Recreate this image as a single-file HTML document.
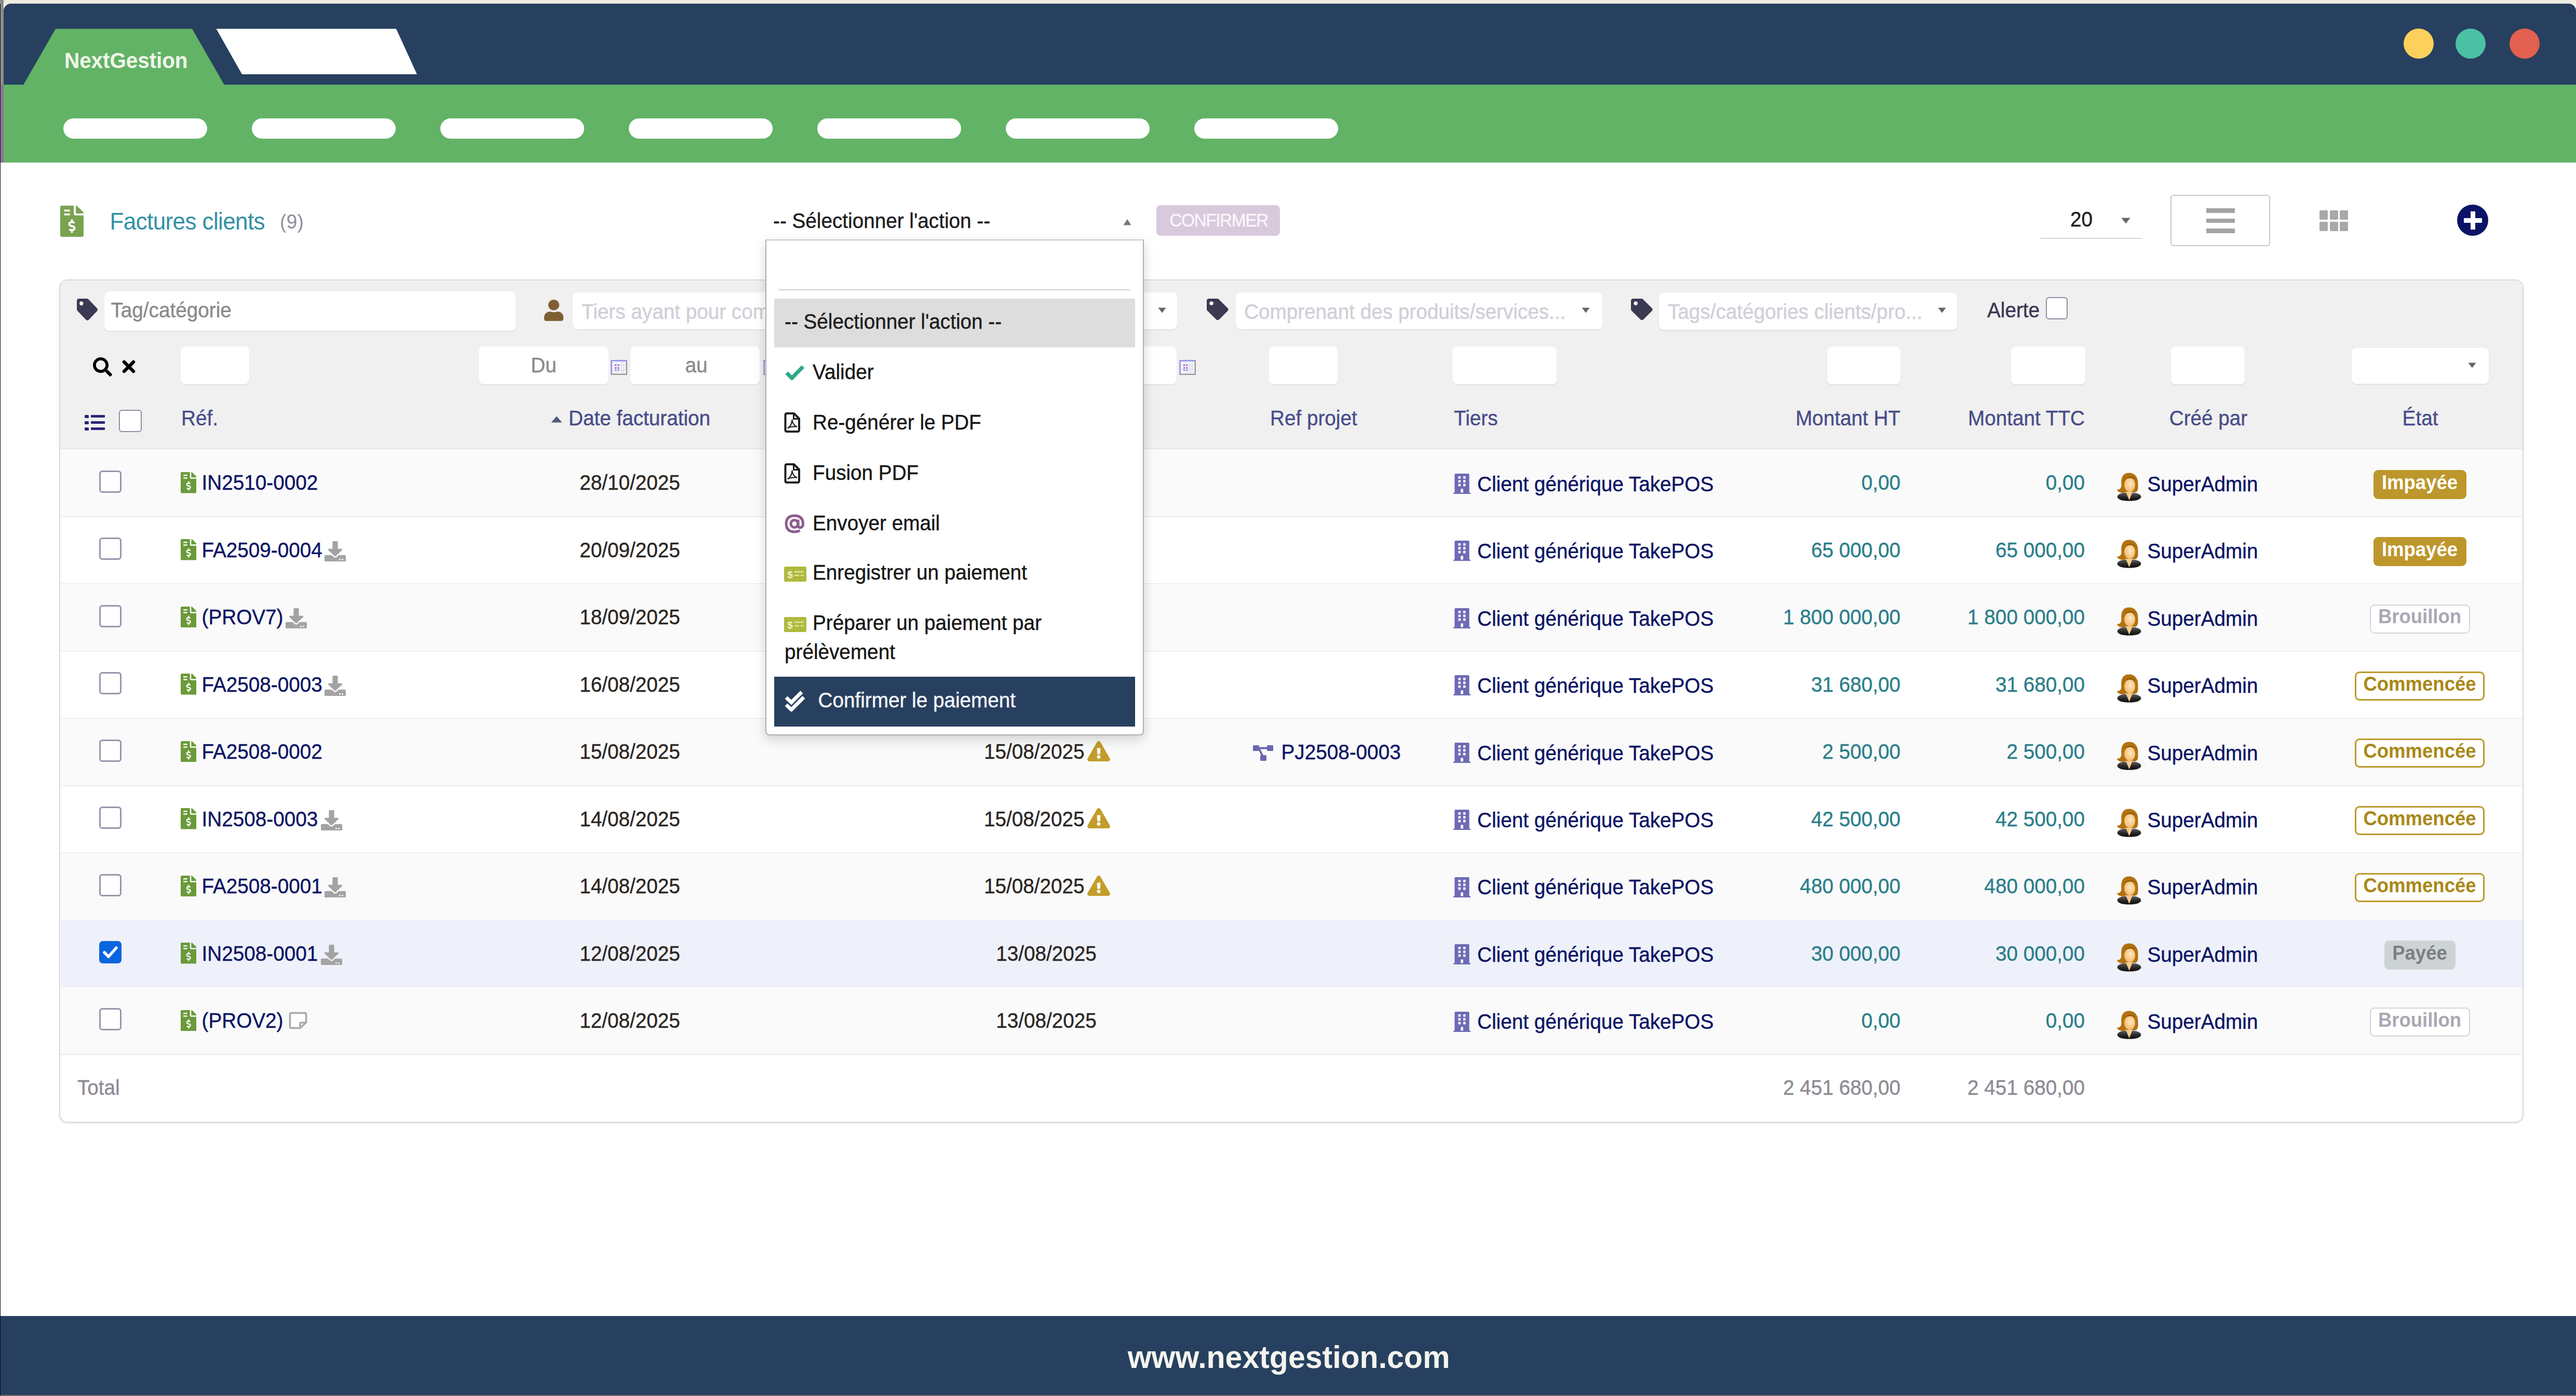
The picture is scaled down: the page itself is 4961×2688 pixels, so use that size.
<!DOCTYPE html>
<html><head><meta charset="utf-8"><title>Factures clients</title>
<style>
html,body{margin:0;padding:0}
body{width:4961px;height:2688px;position:relative;overflow:hidden;background:#fff;font-family:"Liberation Sans",sans-serif;font-size:38.7px}
body div,body span,body svg{position:absolute;display:block}
</style></head><body>
<svg width="0" height="0" style="left:0;top:0"><defs><radialGradient id="sk" cx="55%" cy="42%" r="60%"><stop offset="0" stop-color="#ffe8c2"/><stop offset="1" stop-color="#f4b96b"/></radialGradient><linearGradient id="jk" x1="0" y1="0" x2="0" y2="1"><stop offset="0" stop-color="#606060"/><stop offset="0.55" stop-color="#262626"/><stop offset="1" stop-color="#0e0e0e"/></linearGradient></defs></svg>
<div style="left:0px;top:0px;width:4961px;height:8px;background:#efece3"></div>
<div style="left:0px;top:0px;width:7px;height:163px;background:#8d8d8d"></div>
<div style="left:0px;top:163px;width:7px;height:150px;background:#9a7fa3"></div>
<div style="left:7px;top:7px;width:4954px;height:156px;background:#27405f;border-radius:14px 14px 0 0"></div>
<div style="left:0px;top:163px;width:4961px;height:150px;background:#62b366"></div>
<div style="left:0px;top:163px;width:6.5px;height:150px;background:#8c7596"></div>
<svg style="left:0px;top:0px;" width="900" height="170" viewBox="0 0 900 170" preserveAspectRatio="none"><polygon points="45,163.5 107,55.5 370,55.5 432,163.5" fill="#62b366"/><polygon points="416.5,55.5 763,55.5 803,143 466,143" fill="#fff"/></svg>
<span style="top:97.2px;font-size:40.5px;line-height:40.5px;color:#f1f6ea;white-space:nowrap;font-weight:bold;letter-spacing:-0.1px;left:124px;transform:scaleY(1.04);transform-origin:0 84.65%;">NextGestion</span>
<div style="left:4629px;top:55px;width:58px;height:58px;background:#fbd15b;border-radius:50%"></div>
<div style="left:4729px;top:55px;width:58px;height:58px;background:#4bc0a4;border-radius:50%"></div>
<div style="left:4833px;top:55px;width:58px;height:58px;background:#e2604f;border-radius:50%"></div>
<div style="left:121.5px;top:228px;width:277.5px;height:39px;background:#fff;border-radius:20px"></div>
<div style="left:484.5px;top:228px;width:277.5px;height:39px;background:#fff;border-radius:20px"></div>
<div style="left:847.5px;top:228px;width:277.5px;height:39px;background:#fff;border-radius:20px"></div>
<div style="left:1210.5px;top:228px;width:277.5px;height:39px;background:#fff;border-radius:20px"></div>
<div style="left:1573.5px;top:228px;width:277.5px;height:39px;background:#fff;border-radius:20px"></div>
<div style="left:1936.5px;top:228px;width:277.5px;height:39px;background:#fff;border-radius:20px"></div>
<div style="left:2299.5px;top:228px;width:277.5px;height:39px;background:#fff;border-radius:20px"></div>
<div style="left:0px;top:2534px;width:4961px;height:154px;background:#27405f"></div>
<div style="left:0px;top:2686px;width:4961px;height:2px;background:#74686e"></div>
<div style="left:0px;top:7px;width:1.3px;height:2681px;background:#0a0a0a"></div>
<span style="top:2585.1px;font-size:59px;line-height:59px;color:#f4f4ef;white-space:nowrap;font-weight:bold;left:2482px;transform:translateX(-50%) scaleY(1.04);transform-origin:0 84.65%;">www.nextgestion.com</span>
<svg style="left:116px;top:396px;" width="45" height="60" viewBox="0 0 384 512" fill="#7ba251" preserveAspectRatio="none"><path d="M377 105L279.1 7c-4.5-4.5-10.6-7-17-7H256v128h128v-6.1c0-6.3-2.5-12.4-7-16.9zm-153 31V0H24C10.7 0 0 10.7 0 24v464c0 13.3 10.7 24 24 24h336c13.3 0 24-10.7 24-24V160H248c-13.2 0-24-10.8-24-24zM64 72c0-4.42 3.58-8 8-8h80c4.42 0 8 3.58 8 8v16c0 4.42-3.58 8-8 8H72c-4.42 0-8-3.58-8-8V72zm0 80v-16c0-4.42 3.58-8 8-8h80c4.42 0 8 3.58 8 8v16c0 4.42-3.58 8-8 8H72c-4.42 0-8-3.58-8-8zm144 263.88V440c0 4.42-3.58 8-8 8h-16c-4.42 0-8-3.58-8-8v-24.29c-11.29-.58-22.27-4.52-31.37-11.35-3.9-2.93-4.1-8.77-.57-12.14l11.75-11.21c2.77-2.64 6.89-2.76 10.13-.73 3.87 2.42 8.26 3.72 12.82 3.72h28.11c6.5 0 11.8-5.92 11.8-13.19 0-5.95-3.61-11.19-8.77-12.73l-45-13.5c-18.59-5.58-31.58-23.42-31.58-43.39 0-24.52 19.05-44.44 42.67-45.07V232c0-4.42 3.58-8 8-8h16c4.42 0 8 3.58 8 8v24.29c11.29.58 22.27 4.51 31.37 11.35 3.9 2.93 4.1 8.77.57 12.14l-11.75 11.21c-2.77 2.64-6.89 2.76-10.13.73-3.87-2.43-8.26-3.72-12.82-3.72h-28.11c-6.5 0-11.8 5.92-11.8 13.19 0 5.95 3.61 11.19 8.77 12.73l45 13.5c18.59 5.58 31.58 23.42 31.58 43.39 0 24.53-19.05 44.44-42.67 45.07z"/></svg>
<span style="top:404.8px;font-size:44px;line-height:44px;color:#3190a4;white-space:nowrap;letter-spacing:-0.6px;left:211.5px;transform:scaleY(1.04);transform-origin:0 84.65%;-webkit-text-stroke:0;">Factures clients</span>
<span style="top:409.3px;font-size:37.5px;line-height:37.5px;color:#938e9e;white-space:nowrap;left:539px;transform:scaleY(1.04);transform-origin:0 84.65%;-webkit-text-stroke:0;">(9)</span>
<span style="top:407.2px;font-size:38.7px;line-height:38.7px;color:#1c1c1c;white-space:nowrap;-webkit-text-stroke:0.4px;left:1489px;transform:scaleY(1.04);transform-origin:0 84.65%;">-- Sélectionner l'action --</span>
<svg style="left:2163px;top:421px;" width="16" height="13" viewBox="0 0 16 13" preserveAspectRatio="none"><polygon points="8,1 15.5,12.5 0.5,12.5" fill="#777"/></svg>
<div style="left:2227px;top:395px;width:238px;height:58.5px;background:#d9c9dd;border-radius:8px"></div>
<span style="top:407.6px;font-size:33.5px;line-height:33.5px;color:#faf6fb;white-space:nowrap;-webkit-text-stroke:0.4px;letter-spacing:-1.5px;left:2347px;transform:translateX(-50%) scaleY(1.04);transform-origin:0 84.65%;">CONFIRMER</span>
<span style="top:404.2px;font-size:38.7px;line-height:38.7px;color:#1c1c1c;white-space:nowrap;-webkit-text-stroke:0.4px;left:3987px;transform:scaleY(1.04);transform-origin:0 84.65%;">20</span>
<svg style="left:4085px;top:419px;" width="18" height="12" viewBox="0 0 18 12" preserveAspectRatio="none"><polygon points="0.5,0.5 17.5,0.5 9,11.5" fill="#666"/></svg>
<div style="left:3929px;top:458px;width:196px;height:2px;background:#d6d6d6"></div>
<div style="left:4180px;top:375px;width:192px;height:99px;border:2px solid #c9c9c9;border-radius:6px;box-sizing:border-box;background:#fff"></div>
<div style="left:4249px;top:401px;width:55px;height:8.5px;background:#a3a3a3"></div>
<div style="left:4249px;top:420.5px;width:55px;height:8.5px;background:#a3a3a3"></div>
<div style="left:4249px;top:440px;width:55px;height:8.5px;background:#a3a3a3"></div>
<div style="left:4467.0px;top:405.0px;width:16px;height:18px;background:#a9a9a9;border-radius:2px"></div>
<div style="left:4486.5px;top:405.0px;width:16px;height:18px;background:#a9a9a9;border-radius:2px"></div>
<div style="left:4506.0px;top:405.0px;width:16px;height:18px;background:#a9a9a9;border-radius:2px"></div>
<div style="left:4467.0px;top:426.5px;width:16px;height:18px;background:#a9a9a9;border-radius:2px"></div>
<div style="left:4486.5px;top:426.5px;width:16px;height:18px;background:#a9a9a9;border-radius:2px"></div>
<div style="left:4506.0px;top:426.5px;width:16px;height:18px;background:#a9a9a9;border-radius:2px"></div>
<div style="left:4732px;top:394px;width:60px;height:60px;background:#0b1367;border-radius:50%"></div>
<div style="left:4744.5px;top:419.5px;width:35px;height:9px;background:#fff"></div>
<div style="left:4757.5px;top:406.5px;width:9px;height:35px;background:#fff"></div>
<div style="left:114px;top:538px;width:4746px;height:1624px;border:2.5px solid #d9d9d9;border-radius:16px;box-sizing:border-box;background:#fff;overflow:hidden;box-shadow:0 2px 3px rgba(0,0,0,0.08)"><div style="left:0;top:0;width:4746px;height:324.5px;background:#f0f0f0"></div></div>
<div style="left:116.5px;top:864px;width:4741.0px;height:2px;background:#dcdcdc"></div>
<div style="left:116.5px;top:865.3px;width:4741.0px;height:129.45px;background:#fafafa"></div>
<div style="left:116.5px;top:994.75px;width:4741.0px;height:129.45px;background:#ffffff"></div>
<div style="left:116.5px;top:993.75px;width:4741.0px;height:2px;background:#eeeeee"></div>
<div style="left:116.5px;top:1124.1999999999998px;width:4741.0px;height:129.45px;background:#fafafa"></div>
<div style="left:116.5px;top:1123.1999999999998px;width:4741.0px;height:2px;background:#eeeeee"></div>
<div style="left:116.5px;top:1253.6499999999999px;width:4741.0px;height:129.45px;background:#ffffff"></div>
<div style="left:116.5px;top:1252.6499999999999px;width:4741.0px;height:2px;background:#eeeeee"></div>
<div style="left:116.5px;top:1383.1px;width:4741.0px;height:129.45px;background:#fafafa"></div>
<div style="left:116.5px;top:1382.1px;width:4741.0px;height:2px;background:#eeeeee"></div>
<div style="left:116.5px;top:1512.55px;width:4741.0px;height:129.45px;background:#ffffff"></div>
<div style="left:116.5px;top:1511.55px;width:4741.0px;height:2px;background:#eeeeee"></div>
<div style="left:116.5px;top:1642.0px;width:4741.0px;height:129.45px;background:#fafafa"></div>
<div style="left:116.5px;top:1641.0px;width:4741.0px;height:2px;background:#eeeeee"></div>
<div style="left:116.5px;top:1771.4499999999998px;width:4741.0px;height:129.45px;background:#eef1f9"></div>
<div style="left:116.5px;top:1900.8999999999999px;width:4741.0px;height:129.45px;background:#fafafa"></div>
<div style="left:116.5px;top:2029.35px;width:4741.0px;height:2px;background:#e9e9e9"></div>
<svg style="left:148px;top:574.5px;" width="40" height="42" viewBox="0 0 512 512" fill="#3b3a52" preserveAspectRatio="none"><path d="M0 252.118V48C0 21.49 21.49 0 48 0h204.118a48 48 0 0 1 33.941 14.059l211.882 211.882c18.745 18.745 18.745 49.137 0 67.882L293.823 497.941c-18.745 18.745-49.137 18.745-67.882 0L14.059 286.059A48 48 0 0 1 0 252.118zM112 64c-26.51 0-48 21.49-48 48s21.49 48 48 48 48-21.49 48-48-21.49-48-48-48z"/></svg>
<div style="left:201px;top:561px;width:792px;height:76px;background:#fff;border-radius:9px;box-shadow:0 2px 2px rgba(0,0,0,0.07);"></div>
<span style="top:578.7px;font-size:38.7px;line-height:38.7px;color:#8a8a8a;white-space:nowrap;-webkit-text-stroke:0.4px;left:213.5px;transform:scaleY(1.04);transform-origin:0 84.65%;">Tag/catégorie</span>
<svg style="left:1048px;top:577px;" width="37" height="41" viewBox="0 0 448 512" fill="#7f5f33" preserveAspectRatio="none"><path d="M224 256c70.7 0 128-57.3 128-128S294.7 0 224 0 96 57.3 96 128s57.3 128 128 128zm89.6 32h-16.7c-22.2 10.2-46.9 16-72.9 16s-50.6-5.8-72.9-16h-16.7C60.2 288 0 348.2 0 422.4V464c0 26.5 21.5 48 48 48h352c26.5 0 48-21.5 48-48v-41.6c0-74.2-60.2-134.4-134.4-134.4z"/></svg>
<div style="left:1103px;top:563px;width:1164px;height:71px;background:#fff;border-radius:9px;box-shadow:0 2px 2px rgba(0,0,0,0.07);"></div>
<span style="top:582.2px;font-size:38.7px;line-height:38.7px;color:#cfcfd7;white-space:nowrap;-webkit-text-stroke:0.4px;left:1120px;transform:scaleY(1.04);transform-origin:0 84.65%;">Tiers ayant pour com</span>
<svg style="left:2230px;top:592px;" width="16" height="11" viewBox="0 0 16 11" preserveAspectRatio="none"><polygon points="0.5,0.5 15.5,0.5 8,10.5" fill="#666"/></svg>
<svg style="left:2324px;top:575px;" width="41.5" height="41.5" viewBox="0 0 512 512" fill="#3b3a52" preserveAspectRatio="none"><path d="M0 252.118V48C0 21.49 21.49 0 48 0h204.118a48 48 0 0 1 33.941 14.059l211.882 211.882c18.745 18.745 18.745 49.137 0 67.882L293.823 497.941c-18.745 18.745-49.137 18.745-67.882 0L14.059 286.059A48 48 0 0 1 0 252.118zM112 64c-26.51 0-48 21.49-48 48s21.49 48 48 48 48-21.49 48-48-21.49-48-48-48z"/></svg>
<div style="left:2380px;top:563px;width:706px;height:71px;background:#fff;border-radius:9px;box-shadow:0 2px 2px rgba(0,0,0,0.07);"></div>
<span style="top:582.2px;font-size:38.7px;line-height:38.7px;color:#cfcfd7;white-space:nowrap;-webkit-text-stroke:0.4px;left:2396px;transform:scaleY(1.04);transform-origin:0 84.65%;">Comprenant des produits/services...</span>
<svg style="left:3046px;top:592px;" width="16" height="11" viewBox="0 0 16 11" preserveAspectRatio="none"><polygon points="0.5,0.5 15.5,0.5 8,10.5" fill="#666"/></svg>
<svg style="left:3141px;top:575px;" width="41.5" height="41.5" viewBox="0 0 512 512" fill="#3b3a52" preserveAspectRatio="none"><path d="M0 252.118V48C0 21.49 21.49 0 48 0h204.118a48 48 0 0 1 33.941 14.059l211.882 211.882c18.745 18.745 18.745 49.137 0 67.882L293.823 497.941c-18.745 18.745-49.137 18.745-67.882 0L14.059 286.059A48 48 0 0 1 0 252.118zM112 64c-26.51 0-48 21.49-48 48s21.49 48 48 48 48-21.49 48-48-21.49-48-48-48z"/></svg>
<div style="left:3195px;top:564px;width:574px;height:71px;background:#fff;border-radius:9px;box-shadow:0 2px 2px rgba(0,0,0,0.07);"></div>
<span style="top:582.2px;font-size:38.7px;line-height:38.7px;color:#cfcfd7;white-space:nowrap;-webkit-text-stroke:0.4px;left:3212px;transform:scaleY(1.04);transform-origin:0 84.65%;">Tags/catégories clients/pro...</span>
<svg style="left:3732px;top:592px;" width="16" height="11" viewBox="0 0 16 11" preserveAspectRatio="none"><polygon points="0.5,0.5 15.5,0.5 8,10.5" fill="#666"/></svg>
<span style="top:579.2px;font-size:38.7px;line-height:38.7px;color:#3a3550;white-space:nowrap;-webkit-text-stroke:0.4px;left:3827px;transform:scaleY(1.04);transform-origin:0 84.65%;">Alerte</span>
<div style="left:3940px;top:572px;width:42px;height:43px;background:#fff;border:2.5px solid #8f8ca3;border-radius:6px;box-sizing:border-box"></div>
<svg style="left:179px;top:688px;" width="37" height="37" viewBox="0 0 512 512" fill="#000" preserveAspectRatio="none"><path d="M505 442.7L405.3 343c-4.5-4.5-10.6-7-17-7H372c27.6-35.3 44-79.7 44-128C416 93.1 322.9 0 208 0S0 93.1 0 208s93.1 208 208 208c48.3 0 92.7-16.4 128-44v16.3c0 6.4 2.500 12.5 7 17l99.700 99.700c9.4 9.4 24.600 9.4 33.900 0l28.300-28.300c9.400-9.400 9.400-24.600.1-34zM208 336c-70.700 0-128-57.200-128-128 0-70.700 57.200-128 128-128 70.700 0 128 57.200 128 128 0 70.700-57.200 128-128 128z"/></svg>
<svg style="left:234.5px;top:693px;" width="26" height="26" viewBox="0 0 26 26" preserveAspectRatio="none"><path d="M4 4 L22 22 M22 4 L4 22" stroke="#000" stroke-width="6.5" stroke-linecap="round"/></svg>
<div style="left:348px;top:667px;width:132px;height:73px;background:#fff;border-radius:9px;box-shadow:0 2px 2px rgba(0,0,0,0.07);"></div>
<div style="left:922px;top:667px;width:250px;height:73px;background:#fff;border-radius:9px;box-shadow:0 2px 2px rgba(0,0,0,0.07);"></div>
<div style="left:1214px;top:667px;width:249px;height:73px;background:#fff;border-radius:9px;box-shadow:0 2px 2px rgba(0,0,0,0.07);"></div>
<div style="left:1700px;top:667px;width:566px;height:73px;background:#fff;border-radius:9px;box-shadow:0 2px 2px rgba(0,0,0,0.07);"></div>
<div style="left:2444px;top:667px;width:132px;height:73px;background:#fff;border-radius:9px;box-shadow:0 2px 2px rgba(0,0,0,0.07);"></div>
<div style="left:2797px;top:667px;width:201px;height:73px;background:#fff;border-radius:9px;box-shadow:0 2px 2px rgba(0,0,0,0.07);"></div>
<div style="left:3519px;top:667px;width:141px;height:73px;background:#fff;border-radius:9px;box-shadow:0 2px 2px rgba(0,0,0,0.07);"></div>
<div style="left:3873px;top:667px;width:143px;height:73px;background:#fff;border-radius:9px;box-shadow:0 2px 2px rgba(0,0,0,0.07);"></div>
<div style="left:4181px;top:667px;width:142px;height:73px;background:#fff;border-radius:9px;box-shadow:0 2px 2px rgba(0,0,0,0.07);"></div>
<div style="left:4529px;top:670px;width:264px;height:69px;background:#fff;border-radius:9px;box-shadow:0 2px 2px rgba(0,0,0,0.07);"></div>
<svg style="left:4753px;top:698px;" width="16" height="11" viewBox="0 0 16 11" preserveAspectRatio="none"><polygon points="0.5,0.5 15.5,0.5 8,10.5" fill="#666"/></svg>
<span style="top:684.7px;font-size:38.7px;line-height:38.7px;color:#8a8a8a;white-space:nowrap;-webkit-text-stroke:0.4px;left:1047px;transform:translateX(-50%) scaleY(1.04);transform-origin:0 84.65%;">Du</span>
<span style="top:684.7px;font-size:38.7px;line-height:38.7px;color:#8a8a8a;white-space:nowrap;-webkit-text-stroke:0.4px;left:1341px;transform:translateX(-50%) scaleY(1.04);transform-origin:0 84.65%;">au</span>
<svg style="left:1176px;top:693px;" width="32" height="29" viewBox="0 0 32 29" preserveAspectRatio="none"><rect x="0" y="0" width="32" height="29" fill="#9c9c9c"/><path d="M0 0H32L29.500 3H3V26L0 29z" fill="#9b9ce8"/><rect x="3" y="3" width="26.500" height="23.500" fill="#f5f5fb"/><path d="M3 10.500H29.500M3 18.500H29.500M12 3V26.500M20.500 3V26.500M25 3V26.500" stroke="#dcdcea" stroke-width="1.5"/><path d="M8 8.500h3v3h-3zM13.500 8.500h3v3h-3zM8 14h3v3h-3zM13.500 14h3v3h-3zM8 19h3v2h-3zM13.500 19h3v2h-3z" fill="#a866c9"/></svg>
<svg style="left:1469.5px;top:693px;" width="32" height="29" viewBox="0 0 32 29" preserveAspectRatio="none"><rect x="0" y="0" width="32" height="29" fill="#9c9c9c"/><path d="M0 0H32L29.500 3H3V26L0 29z" fill="#9b9ce8"/><rect x="3" y="3" width="26.500" height="23.500" fill="#f5f5fb"/><path d="M3 10.500H29.500M3 18.500H29.500M12 3V26.500M20.500 3V26.500M25 3V26.500" stroke="#dcdcea" stroke-width="1.5"/><path d="M8 8.500h3v3h-3zM13.500 8.500h3v3h-3zM8 14h3v3h-3zM13.500 14h3v3h-3zM8 19h3v2h-3zM13.500 19h3v2h-3z" fill="#a866c9"/></svg>
<svg style="left:2271px;top:693px;" width="32" height="29" viewBox="0 0 32 29" preserveAspectRatio="none"><rect x="0" y="0" width="32" height="29" fill="#9c9c9c"/><path d="M0 0H32L29.500 3H3V26L0 29z" fill="#9b9ce8"/><rect x="3" y="3" width="26.500" height="23.500" fill="#f5f5fb"/><path d="M3 10.500H29.500M3 18.500H29.500M12 3V26.500M20.500 3V26.500M25 3V26.500" stroke="#dcdcea" stroke-width="1.5"/><path d="M8 8.500h3v3h-3zM13.500 8.500h3v3h-3zM8 14h3v3h-3zM13.500 14h3v3h-3zM8 19h3v2h-3zM13.500 19h3v2h-3z" fill="#a866c9"/></svg>
<div style="left:163px;top:798.7px;width:8px;height:6px;background:#2b2678;border-radius:1.5px"></div>
<div style="left:175px;top:799.2px;width:26.5px;height:5px;background:#2b2678;border-radius:1px"></div>
<div style="left:163px;top:810.75px;width:8px;height:6px;background:#2b2678;border-radius:1.5px"></div>
<div style="left:175px;top:811.25px;width:26.5px;height:5px;background:#2b2678;border-radius:1px"></div>
<div style="left:163px;top:822.8000000000001px;width:8px;height:6px;background:#2b2678;border-radius:1.5px"></div>
<div style="left:175px;top:823.3000000000001px;width:26.5px;height:5px;background:#2b2678;border-radius:1px"></div>
<div style="left:229px;top:789px;width:44px;height:43px;background:#fff;border:2.5px solid #8f8ca3;border-radius:6px;box-sizing:border-box"></div>
<span style="top:787.2px;font-size:38.7px;line-height:38.7px;color:#484d8a;white-space:nowrap;-webkit-text-stroke:0.4px;left:349px;transform:scaleY(1.04);transform-origin:0 84.65%;">Réf.</span>
<svg style="left:1061px;top:801px;" width="22" height="13" viewBox="0 0 22 13" preserveAspectRatio="none"><polygon points="11,0.5 21.5,12.5 0.5,12.5" fill="#555a7a"/></svg>
<span style="top:787.2px;font-size:38.7px;line-height:38.7px;color:#484d8a;white-space:nowrap;left:1095px;transform:scaleY(1.04);transform-origin:0 84.65%;-webkit-text-stroke:0.5px #484d8a;">Date facturation</span>
<span style="top:787.2px;font-size:38.7px;line-height:38.7px;color:#484d8a;white-space:nowrap;-webkit-text-stroke:0.4px;left:1880px;transform:scaleY(1.04);transform-origin:0 84.65%;">Date échéance</span>
<span style="top:787.2px;font-size:38.7px;line-height:38.7px;color:#484d8a;white-space:nowrap;-webkit-text-stroke:0.4px;left:2446px;transform:scaleY(1.04);transform-origin:0 84.65%;">Ref projet</span>
<span style="top:787.2px;font-size:38.7px;line-height:38.7px;color:#484d8a;white-space:nowrap;-webkit-text-stroke:0.4px;left:2800px;transform:scaleY(1.04);transform-origin:0 84.65%;">Tiers</span>
<span style="top:787.2px;font-size:38.7px;line-height:38.7px;color:#484d8a;white-space:nowrap;-webkit-text-stroke:0.4px;right:1301px;transform:scaleY(1.04);transform-origin:0 84.65%;">Montant HT</span>
<span style="top:787.2px;font-size:38.7px;line-height:38.7px;color:#484d8a;white-space:nowrap;-webkit-text-stroke:0.4px;right:946px;transform:scaleY(1.04);transform-origin:0 84.65%;">Montant TTC</span>
<span style="top:787.2px;font-size:38.7px;line-height:38.7px;color:#484d8a;white-space:nowrap;-webkit-text-stroke:0.4px;left:4253px;transform:translateX(-50%) scaleY(1.04);transform-origin:0 84.65%;">Créé par</span>
<span style="top:787.2px;font-size:38.7px;line-height:38.7px;color:#484d8a;white-space:nowrap;-webkit-text-stroke:0.4px;left:4661px;transform:translateX(-50%) scaleY(1.04);transform-origin:0 84.65%;">État</span>
<div style="left:191px;top:905.8249999999999px;width:43px;height:43px;background:#fff;border:3px solid #9996ac;border-radius:6px;box-sizing:border-box"></div>
<svg style="left:347.5px;top:909.025px;" width="30.5" height="40.5" viewBox="0 0 384 512" fill="#6b9a3a" preserveAspectRatio="none"><path d="M377 105L279.1 7c-4.5-4.5-10.6-7-17-7H256v128h128v-6.1c0-6.3-2.5-12.4-7-16.9zm-153 31V0H24C10.7 0 0 10.7 0 24v464c0 13.3 10.7 24 24 24h336c13.3 0 24-10.7 24-24V160H248c-13.2 0-24-10.8-24-24zM64 72c0-4.42 3.58-8 8-8h80c4.42 0 8 3.58 8 8v16c0 4.42-3.58 8-8 8H72c-4.42 0-8-3.58-8-8V72zm0 80v-16c0-4.42 3.58-8 8-8h80c4.42 0 8 3.58 8 8v16c0 4.42-3.58 8-8 8H72c-4.42 0-8-3.58-8-8zm144 263.88V440c0 4.42-3.58 8-8 8h-16c-4.42 0-8-3.58-8-8v-24.29c-11.29-.58-22.27-4.52-31.37-11.35-3.9-2.93-4.1-8.77-.57-12.14l11.75-11.21c2.77-2.64 6.89-2.76 10.13-.73 3.87 2.42 8.26 3.72 12.82 3.72h28.11c6.5 0 11.8-5.92 11.8-13.19 0-5.95-3.61-11.19-8.77-12.73l-45-13.5c-18.59-5.58-31.58-23.42-31.58-43.39 0-24.52 19.05-44.44 42.67-45.07V232c0-4.42 3.58-8 8-8h16c4.42 0 8 3.58 8 8v24.29c11.29.58 22.27 4.51 31.37 11.35 3.9 2.93 4.1 8.77.57 12.14l-11.75 11.21c-2.77 2.64-6.89 2.76-10.13.73-3.87-2.43-8.26-3.72-12.82-3.72h-28.11c-6.5 0-11.8 5.92-11.8 13.19 0 5.95 3.61 11.19 8.77 12.73l45 13.5c18.59 5.58 31.58 23.42 31.58 43.39 0 24.53-19.05 44.44-42.67 45.07z"/></svg>
<span style="top:911.3px;font-size:38.7px;line-height:38.7px;color:#0a1464;white-space:nowrap;-webkit-text-stroke:0.4px;left:388.5px;transform:scaleY(1.04);transform-origin:0 84.65%;">IN2510-0002</span>
<span style="top:911.3px;font-size:38.7px;line-height:38.7px;color:#2b2622;white-space:nowrap;-webkit-text-stroke:0.4px;left:1213px;transform:translateX(-50%) scaleY(1.04);transform-origin:0 84.65%;">28/10/2025</span>
<svg style="left:2799px;top:912.025px;" width="33" height="39" viewBox="0 0 448 512" fill="#6e6ab6" preserveAspectRatio="none"><path d="M436 480h-20V24c0-13.255-10.745-24-24-24H56C42.745 0 32 10.745 32 24v456H12c-6.627 0-12 5.373-12 12v20h448v-20c0-6.627-5.373-12-12-12zM128 76c0-6.627 5.373-12 12-12h40c6.627 0 12 5.373 12 12v40c0 6.627-5.373 12-12 12h-40c-6.627 0-12-5.373-12-12V76zm0 96c0-6.627 5.373-12 12-12h40c6.627 0 12 5.373 12 12v40c0 6.627-5.373 12-12 12h-40c-6.627 0-12-5.373-12-12v-40zm52 148h-40c-6.627 0-12-5.373-12-12v-40c0-6.627 5.373-12 12-12h40c6.627 0 12 5.373 12 12v40c0 6.627-5.373 12-12 12zm76 160h-64v-84c0-6.627 5.373-12 12-12h40c6.627 0 12 5.373 12 12v84zm64-172c0 6.627-5.373 12-12 12h-40c-6.627 0-12-5.373-12-12v-40c0-6.627 5.373-12 12-12h40c6.627 0 12 5.373 12 12v40zm0-96c0 6.627-5.373 12-12 12h-40c-6.627 0-12-5.373-12-12v-40c0-6.627 5.373-12 12-12h40c6.627 0 12 5.373 12 12v40zm0-96c0 6.627-5.373 12-12 12h-40c-6.627 0-12-5.373-12-12V76c0-6.627 5.373-12 12-12h40c6.627 0 12 5.373 12 12v40z"/></svg>
<span style="top:913.7px;font-size:38.7px;line-height:38.7px;color:#0a1464;white-space:nowrap;-webkit-text-stroke:0.4px;left:2845px;transform:scaleY(1.04);transform-origin:0 84.65%;">Client générique TakePOS</span>
<span style="top:911.3px;font-size:38.7px;line-height:38.7px;color:#2b7e8a;white-space:nowrap;-webkit-text-stroke:0.4px;right:1301px;transform:scaleY(1.04);transform-origin:0 84.65%;">0,00</span>
<span style="top:911.3px;font-size:38.7px;line-height:38.7px;color:#2b7e8a;white-space:nowrap;-webkit-text-stroke:0.4px;right:946px;transform:scaleY(1.04);transform-origin:0 84.65%;">0,00</span>
<svg style="left:4075px;top:910.025px;" width="50" height="55" viewBox="0 0 50 55" preserveAspectRatio="none"><path d="M2.500 47 Q3 40 17 38.500 L33 38.500 Q48 40 48.500 47 Q46 54.500 25.500 54.500 Q5 54.500 2.500 47z" fill="url(#jk)"/>
<path d="M18.500 36 L25.500 53 L32.500 36z" fill="#f8ca8c"/>
<path d="M25 0.500 C12 0.500 9.500 12 10.500 23 C10.800 30 7 33.500 1.500 32.500 C4 39 14 40.500 19 37 L32 37 C39 40 43.500 36 42.500 24 C43.500 11 38 0.500 25 0.500z" fill="#b3720f"/>
<ellipse cx="26.500" cy="23.500" rx="10.500" ry="13.500" fill="url(#sk)"/>
<path d="M13 25 C13 12 26 7 38 13.500 C35 4.500 15 3 13 25z" fill="#9a5f0a"/></svg>
<span style="top:913.7px;font-size:38.7px;line-height:38.7px;color:#0a1464;white-space:nowrap;-webkit-text-stroke:0.4px;left:4135.5px;transform:scaleY(1.04);transform-origin:0 84.65%;">SuperAdmin</span>
<div style="left:4570.5px;top:904.625px;width:179px;height:56px;background:#bd972c;border-radius:9px;"></div>
<span style="top:911.5px;font-size:36.5px;line-height:36.5px;color:#ffffff;white-space:nowrap;font-weight:bold;left:4660px;transform:translateX(-50%) scaleY(1.08);transform-origin:0 84.65%;">Impayée</span>
<div style="left:191px;top:1035.2749999999999px;width:43px;height:43px;background:#fff;border:3px solid #9996ac;border-radius:6px;box-sizing:border-box"></div>
<svg style="left:347.5px;top:1038.475px;" width="30.5" height="40.5" viewBox="0 0 384 512" fill="#6b9a3a" preserveAspectRatio="none"><path d="M377 105L279.1 7c-4.5-4.5-10.6-7-17-7H256v128h128v-6.1c0-6.3-2.5-12.4-7-16.9zm-153 31V0H24C10.7 0 0 10.7 0 24v464c0 13.3 10.7 24 24 24h336c13.3 0 24-10.7 24-24V160H248c-13.2 0-24-10.8-24-24zM64 72c0-4.42 3.58-8 8-8h80c4.42 0 8 3.58 8 8v16c0 4.42-3.58 8-8 8H72c-4.42 0-8-3.58-8-8V72zm0 80v-16c0-4.42 3.58-8 8-8h80c4.42 0 8 3.58 8 8v16c0 4.42-3.58 8-8 8H72c-4.42 0-8-3.58-8-8zm144 263.88V440c0 4.42-3.58 8-8 8h-16c-4.42 0-8-3.58-8-8v-24.29c-11.29-.58-22.27-4.52-31.37-11.35-3.9-2.93-4.1-8.77-.57-12.14l11.75-11.21c2.77-2.64 6.89-2.76 10.13-.73 3.87 2.42 8.26 3.72 12.82 3.72h28.11c6.5 0 11.8-5.92 11.8-13.19 0-5.95-3.61-11.19-8.77-12.73l-45-13.5c-18.59-5.58-31.58-23.42-31.58-43.39 0-24.52 19.05-44.44 42.67-45.07V232c0-4.42 3.58-8 8-8h16c4.42 0 8 3.58 8 8v24.29c11.29.58 22.27 4.51 31.37 11.35 3.9 2.93 4.1 8.77.57 12.14l-11.75 11.21c-2.77 2.64-6.89 2.76-10.13.73-3.87-2.43-8.26-3.72-12.82-3.72h-28.11c-6.5 0-11.8 5.92-11.8 13.19 0 5.95 3.61 11.19 8.77 12.73l45 13.5c18.59 5.58 31.58 23.42 31.58 43.39 0 24.53-19.05 44.44-42.67 45.07z"/></svg>
<span style="top:1040.8px;font-size:38.7px;line-height:38.7px;color:#0a1464;white-space:nowrap;-webkit-text-stroke:0.4px;left:388.5px;transform:scaleY(1.04);transform-origin:0 84.65%;">FA2509-0004</span>
<svg style="left:624.5px;top:1041.975px;" width="41" height="39" viewBox="0 0 512 512" fill="#a3a3a3" preserveAspectRatio="none"><path d="M216 0h80c13.3 0 24 10.7 24 24v168h87.7c17.8 0 26.7 21.5 14.1 34.1L269.7 378.3c-7.5 7.5-19.8 7.5-27.3 0L90.1 226.1c-12.6-12.6-3.7-34.1 14.1-34.1H192V24c0-13.3 10.7-24 24-24zm296 376v112c0 13.3-10.7 24-24 24H24c-13.3 0-24-10.7-24-24V376c0-13.3 10.7-24 24-24h146.7l49 49c20.1 20.1 52.5 20.1 72.6 0l49-49H488c13.3 0 24 10.7 24 24zm-124 88c0-11-9-20-20-20s-20 9-20 20 9 20 20 20 20-9 20-20zm64 0c0-11-9-20-20-20s-20 9-20 20 9 20 20 20 20-9 20-20z"/></svg>
<span style="top:1040.8px;font-size:38.7px;line-height:38.7px;color:#2b2622;white-space:nowrap;-webkit-text-stroke:0.4px;left:1213px;transform:translateX(-50%) scaleY(1.04);transform-origin:0 84.65%;">20/09/2025</span>
<svg style="left:2799px;top:1041.475px;" width="33" height="39" viewBox="0 0 448 512" fill="#6e6ab6" preserveAspectRatio="none"><path d="M436 480h-20V24c0-13.255-10.745-24-24-24H56C42.745 0 32 10.745 32 24v456H12c-6.627 0-12 5.373-12 12v20h448v-20c0-6.627-5.373-12-12-12zM128 76c0-6.627 5.373-12 12-12h40c6.627 0 12 5.373 12 12v40c0 6.627-5.373 12-12 12h-40c-6.627 0-12-5.373-12-12V76zm0 96c0-6.627 5.373-12 12-12h40c6.627 0 12 5.373 12 12v40c0 6.627-5.373 12-12 12h-40c-6.627 0-12-5.373-12-12v-40zm52 148h-40c-6.627 0-12-5.373-12-12v-40c0-6.627 5.373-12 12-12h40c6.627 0 12 5.373 12 12v40c0 6.627-5.373 12-12 12zm76 160h-64v-84c0-6.627 5.373-12 12-12h40c6.627 0 12 5.373 12 12v84zm64-172c0 6.627-5.373 12-12 12h-40c-6.627 0-12-5.373-12-12v-40c0-6.627 5.373-12 12-12h40c6.627 0 12 5.373 12 12v40zm0-96c0 6.627-5.373 12-12 12h-40c-6.627 0-12-5.373-12-12v-40c0-6.627 5.373-12 12-12h40c6.627 0 12 5.373 12 12v40zm0-96c0 6.627-5.373 12-12 12h-40c-6.627 0-12-5.373-12-12V76c0-6.627 5.373-12 12-12h40c6.627 0 12 5.373 12 12v40z"/></svg>
<span style="top:1043.2px;font-size:38.7px;line-height:38.7px;color:#0a1464;white-space:nowrap;-webkit-text-stroke:0.4px;left:2845px;transform:scaleY(1.04);transform-origin:0 84.65%;">Client générique TakePOS</span>
<span style="top:1040.8px;font-size:38.7px;line-height:38.7px;color:#2b7e8a;white-space:nowrap;-webkit-text-stroke:0.4px;right:1301px;transform:scaleY(1.04);transform-origin:0 84.65%;">65 000,00</span>
<span style="top:1040.8px;font-size:38.7px;line-height:38.7px;color:#2b7e8a;white-space:nowrap;-webkit-text-stroke:0.4px;right:946px;transform:scaleY(1.04);transform-origin:0 84.65%;">65 000,00</span>
<svg style="left:4075px;top:1039.475px;" width="50" height="55" viewBox="0 0 50 55" preserveAspectRatio="none"><path d="M2.500 47 Q3 40 17 38.500 L33 38.500 Q48 40 48.500 47 Q46 54.500 25.500 54.500 Q5 54.500 2.500 47z" fill="url(#jk)"/>
<path d="M18.500 36 L25.500 53 L32.500 36z" fill="#f8ca8c"/>
<path d="M25 0.500 C12 0.500 9.500 12 10.500 23 C10.800 30 7 33.500 1.500 32.500 C4 39 14 40.500 19 37 L32 37 C39 40 43.500 36 42.500 24 C43.500 11 38 0.500 25 0.500z" fill="#b3720f"/>
<ellipse cx="26.500" cy="23.500" rx="10.500" ry="13.500" fill="url(#sk)"/>
<path d="M13 25 C13 12 26 7 38 13.500 C35 4.500 15 3 13 25z" fill="#9a5f0a"/></svg>
<span style="top:1043.2px;font-size:38.7px;line-height:38.7px;color:#0a1464;white-space:nowrap;-webkit-text-stroke:0.4px;left:4135.5px;transform:scaleY(1.04);transform-origin:0 84.65%;">SuperAdmin</span>
<div style="left:4570.5px;top:1034.0749999999998px;width:179px;height:56px;background:#bd972c;border-radius:9px;"></div>
<span style="top:1041.0px;font-size:36.5px;line-height:36.5px;color:#ffffff;white-space:nowrap;font-weight:bold;left:4660px;transform:translateX(-50%) scaleY(1.08);transform-origin:0 84.65%;">Impayée</span>
<div style="left:191px;top:1164.7249999999997px;width:43px;height:43px;background:#fff;border:3px solid #9996ac;border-radius:6px;box-sizing:border-box"></div>
<svg style="left:347.5px;top:1167.9249999999997px;" width="30.5" height="40.5" viewBox="0 0 384 512" fill="#6b9a3a" preserveAspectRatio="none"><path d="M377 105L279.1 7c-4.5-4.5-10.6-7-17-7H256v128h128v-6.1c0-6.3-2.5-12.4-7-16.9zm-153 31V0H24C10.7 0 0 10.7 0 24v464c0 13.3 10.7 24 24 24h336c13.3 0 24-10.7 24-24V160H248c-13.2 0-24-10.8-24-24zM64 72c0-4.42 3.58-8 8-8h80c4.42 0 8 3.58 8 8v16c0 4.42-3.58 8-8 8H72c-4.42 0-8-3.58-8-8V72zm0 80v-16c0-4.42 3.58-8 8-8h80c4.42 0 8 3.58 8 8v16c0 4.42-3.58 8-8 8H72c-4.42 0-8-3.58-8-8zm144 263.88V440c0 4.42-3.58 8-8 8h-16c-4.42 0-8-3.58-8-8v-24.29c-11.29-.58-22.27-4.52-31.37-11.35-3.9-2.93-4.1-8.77-.57-12.14l11.75-11.21c2.77-2.64 6.89-2.76 10.13-.73 3.87 2.42 8.26 3.72 12.82 3.72h28.11c6.5 0 11.8-5.92 11.8-13.19 0-5.95-3.61-11.19-8.77-12.73l-45-13.5c-18.59-5.58-31.58-23.42-31.58-43.39 0-24.52 19.05-44.44 42.67-45.07V232c0-4.42 3.58-8 8-8h16c4.42 0 8 3.58 8 8v24.29c11.29.58 22.27 4.51 31.37 11.35 3.9 2.93 4.1 8.77.57 12.14l-11.75 11.21c-2.77 2.64-6.89 2.76-10.13.73-3.87-2.43-8.26-3.72-12.82-3.72h-28.11c-6.5 0-11.8 5.92-11.8 13.19 0 5.95 3.61 11.19 8.77 12.73l45 13.5c18.59 5.58 31.58 23.42 31.58 43.39 0 24.53-19.05 44.44-42.67 45.07z"/></svg>
<span style="top:1170.2px;font-size:38.7px;line-height:38.7px;color:#0a1464;white-space:nowrap;-webkit-text-stroke:0.4px;left:388.5px;transform:scaleY(1.04);transform-origin:0 84.65%;">(PROV7)</span>
<svg style="left:549.5px;top:1171.4249999999997px;" width="41" height="39" viewBox="0 0 512 512" fill="#a3a3a3" preserveAspectRatio="none"><path d="M216 0h80c13.3 0 24 10.7 24 24v168h87.7c17.8 0 26.7 21.5 14.1 34.1L269.7 378.3c-7.5 7.5-19.8 7.5-27.3 0L90.1 226.1c-12.6-12.6-3.7-34.1 14.1-34.1H192V24c0-13.3 10.7-24 24-24zm296 376v112c0 13.3-10.7 24-24 24H24c-13.3 0-24-10.7-24-24V376c0-13.3 10.7-24 24-24h146.7l49 49c20.1 20.1 52.5 20.1 72.6 0l49-49H488c13.3 0 24 10.7 24 24zm-124 88c0-11-9-20-20-20s-20 9-20 20 9 20 20 20 20-9 20-20zm64 0c0-11-9-20-20-20s-20 9-20 20 9 20 20 20 20-9 20-20z"/></svg>
<span style="top:1170.2px;font-size:38.7px;line-height:38.7px;color:#2b2622;white-space:nowrap;-webkit-text-stroke:0.4px;left:1213px;transform:translateX(-50%) scaleY(1.04);transform-origin:0 84.65%;">18/09/2025</span>
<svg style="left:2799px;top:1170.9249999999997px;" width="33" height="39" viewBox="0 0 448 512" fill="#6e6ab6" preserveAspectRatio="none"><path d="M436 480h-20V24c0-13.255-10.745-24-24-24H56C42.745 0 32 10.745 32 24v456H12c-6.627 0-12 5.373-12 12v20h448v-20c0-6.627-5.373-12-12-12zM128 76c0-6.627 5.373-12 12-12h40c6.627 0 12 5.373 12 12v40c0 6.627-5.373 12-12 12h-40c-6.627 0-12-5.373-12-12V76zm0 96c0-6.627 5.373-12 12-12h40c6.627 0 12 5.373 12 12v40c0 6.627-5.373 12-12 12h-40c-6.627 0-12-5.373-12-12v-40zm52 148h-40c-6.627 0-12-5.373-12-12v-40c0-6.627 5.373-12 12-12h40c6.627 0 12 5.373 12 12v40c0 6.627-5.373 12-12 12zm76 160h-64v-84c0-6.627 5.373-12 12-12h40c6.627 0 12 5.373 12 12v84zm64-172c0 6.627-5.373 12-12 12h-40c-6.627 0-12-5.373-12-12v-40c0-6.627 5.373-12 12-12h40c6.627 0 12 5.373 12 12v40zm0-96c0 6.627-5.373 12-12 12h-40c-6.627 0-12-5.373-12-12v-40c0-6.627 5.373-12 12-12h40c6.627 0 12 5.373 12 12v40zm0-96c0 6.627-5.373 12-12 12h-40c-6.627 0-12-5.373-12-12V76c0-6.627 5.373-12 12-12h40c6.627 0 12 5.373 12 12v40z"/></svg>
<span style="top:1172.6px;font-size:38.7px;line-height:38.7px;color:#0a1464;white-space:nowrap;-webkit-text-stroke:0.4px;left:2845px;transform:scaleY(1.04);transform-origin:0 84.65%;">Client générique TakePOS</span>
<span style="top:1170.2px;font-size:38.7px;line-height:38.7px;color:#2b7e8a;white-space:nowrap;-webkit-text-stroke:0.4px;right:1301px;transform:scaleY(1.04);transform-origin:0 84.65%;">1 800 000,00</span>
<span style="top:1170.2px;font-size:38.7px;line-height:38.7px;color:#2b7e8a;white-space:nowrap;-webkit-text-stroke:0.4px;right:946px;transform:scaleY(1.04);transform-origin:0 84.65%;">1 800 000,00</span>
<svg style="left:4075px;top:1168.9249999999997px;" width="50" height="55" viewBox="0 0 50 55" preserveAspectRatio="none"><path d="M2.500 47 Q3 40 17 38.500 L33 38.500 Q48 40 48.500 47 Q46 54.500 25.500 54.500 Q5 54.500 2.500 47z" fill="url(#jk)"/>
<path d="M18.500 36 L25.500 53 L32.500 36z" fill="#f8ca8c"/>
<path d="M25 0.500 C12 0.500 9.500 12 10.500 23 C10.800 30 7 33.500 1.500 32.500 C4 39 14 40.500 19 37 L32 37 C39 40 43.500 36 42.500 24 C43.500 11 38 0.500 25 0.500z" fill="#b3720f"/>
<ellipse cx="26.500" cy="23.500" rx="10.500" ry="13.500" fill="url(#sk)"/>
<path d="M13 25 C13 12 26 7 38 13.500 C35 4.500 15 3 13 25z" fill="#9a5f0a"/></svg>
<span style="top:1172.6px;font-size:38.7px;line-height:38.7px;color:#0a1464;white-space:nowrap;-webkit-text-stroke:0.4px;left:4135.5px;transform:scaleY(1.04);transform-origin:0 84.65%;">SuperAdmin</span>
<div style="left:4563.5px;top:1163.5249999999996px;width:193px;height:56px;background:#fff;border:2.5px solid #cfd6d9;border-radius:9px;box-sizing:border-box;"></div>
<span style="top:1170.4px;font-size:36.5px;line-height:36.5px;color:#a9a9b3;white-space:nowrap;font-weight:bold;left:4660px;transform:translateX(-50%) scaleY(1.08);transform-origin:0 84.65%;">Brouillon</span>
<div style="left:191px;top:1294.1749999999997px;width:43px;height:43px;background:#fff;border:3px solid #9996ac;border-radius:6px;box-sizing:border-box"></div>
<svg style="left:347.5px;top:1297.3749999999998px;" width="30.5" height="40.5" viewBox="0 0 384 512" fill="#6b9a3a" preserveAspectRatio="none"><path d="M377 105L279.1 7c-4.5-4.5-10.6-7-17-7H256v128h128v-6.1c0-6.3-2.5-12.4-7-16.9zm-153 31V0H24C10.7 0 0 10.7 0 24v464c0 13.3 10.7 24 24 24h336c13.3 0 24-10.7 24-24V160H248c-13.2 0-24-10.8-24-24zM64 72c0-4.42 3.58-8 8-8h80c4.42 0 8 3.58 8 8v16c0 4.42-3.58 8-8 8H72c-4.42 0-8-3.58-8-8V72zm0 80v-16c0-4.42 3.58-8 8-8h80c4.42 0 8 3.58 8 8v16c0 4.42-3.58 8-8 8H72c-4.42 0-8-3.58-8-8zm144 263.88V440c0 4.42-3.58 8-8 8h-16c-4.42 0-8-3.58-8-8v-24.29c-11.29-.58-22.27-4.52-31.37-11.35-3.9-2.93-4.1-8.77-.57-12.14l11.75-11.21c2.77-2.64 6.89-2.76 10.13-.73 3.87 2.42 8.26 3.72 12.82 3.72h28.11c6.5 0 11.8-5.92 11.8-13.19 0-5.95-3.61-11.19-8.77-12.73l-45-13.5c-18.59-5.58-31.58-23.42-31.58-43.39 0-24.52 19.05-44.44 42.67-45.07V232c0-4.42 3.58-8 8-8h16c4.42 0 8 3.58 8 8v24.29c11.29.58 22.27 4.51 31.37 11.35 3.9 2.93 4.1 8.77.57 12.14l-11.75 11.21c-2.77 2.64-6.89 2.76-10.13.73-3.87-2.43-8.26-3.72-12.82-3.72h-28.11c-6.5 0-11.8 5.92-11.8 13.19 0 5.95 3.61 11.19 8.77 12.73l45 13.5c18.59 5.58 31.58 23.42 31.58 43.39 0 24.53-19.05 44.44-42.67 45.07z"/></svg>
<span style="top:1299.7px;font-size:38.7px;line-height:38.7px;color:#0a1464;white-space:nowrap;-webkit-text-stroke:0.4px;left:388.5px;transform:scaleY(1.04);transform-origin:0 84.65%;">FA2508-0003</span>
<svg style="left:624.5px;top:1300.8749999999998px;" width="41" height="39" viewBox="0 0 512 512" fill="#a3a3a3" preserveAspectRatio="none"><path d="M216 0h80c13.3 0 24 10.7 24 24v168h87.7c17.8 0 26.7 21.5 14.1 34.1L269.7 378.3c-7.5 7.5-19.8 7.5-27.3 0L90.1 226.1c-12.6-12.6-3.7-34.1 14.1-34.1H192V24c0-13.3 10.7-24 24-24zm296 376v112c0 13.3-10.7 24-24 24H24c-13.3 0-24-10.7-24-24V376c0-13.3 10.7-24 24-24h146.7l49 49c20.1 20.1 52.5 20.1 72.6 0l49-49H488c13.3 0 24 10.7 24 24zm-124 88c0-11-9-20-20-20s-20 9-20 20 9 20 20 20 20-9 20-20zm64 0c0-11-9-20-20-20s-20 9-20 20 9 20 20 20 20-9 20-20z"/></svg>
<span style="top:1299.7px;font-size:38.7px;line-height:38.7px;color:#2b2622;white-space:nowrap;-webkit-text-stroke:0.4px;left:1213px;transform:translateX(-50%) scaleY(1.04);transform-origin:0 84.65%;">16/08/2025</span>
<svg style="left:2799px;top:1300.3749999999998px;" width="33" height="39" viewBox="0 0 448 512" fill="#6e6ab6" preserveAspectRatio="none"><path d="M436 480h-20V24c0-13.255-10.745-24-24-24H56C42.745 0 32 10.745 32 24v456H12c-6.627 0-12 5.373-12 12v20h448v-20c0-6.627-5.373-12-12-12zM128 76c0-6.627 5.373-12 12-12h40c6.627 0 12 5.373 12 12v40c0 6.627-5.373 12-12 12h-40c-6.627 0-12-5.373-12-12V76zm0 96c0-6.627 5.373-12 12-12h40c6.627 0 12 5.373 12 12v40c0 6.627-5.373 12-12 12h-40c-6.627 0-12-5.373-12-12v-40zm52 148h-40c-6.627 0-12-5.373-12-12v-40c0-6.627 5.373-12 12-12h40c6.627 0 12 5.373 12 12v40c0 6.627-5.373 12-12 12zm76 160h-64v-84c0-6.627 5.373-12 12-12h40c6.627 0 12 5.373 12 12v84zm64-172c0 6.627-5.373 12-12 12h-40c-6.627 0-12-5.373-12-12v-40c0-6.627 5.373-12 12-12h40c6.627 0 12 5.373 12 12v40zm0-96c0 6.627-5.373 12-12 12h-40c-6.627 0-12-5.373-12-12v-40c0-6.627 5.373-12 12-12h40c6.627 0 12 5.373 12 12v40zm0-96c0 6.627-5.373 12-12 12h-40c-6.627 0-12-5.373-12-12V76c0-6.627 5.373-12 12-12h40c6.627 0 12 5.373 12 12v40z"/></svg>
<span style="top:1302.1px;font-size:38.7px;line-height:38.7px;color:#0a1464;white-space:nowrap;-webkit-text-stroke:0.4px;left:2845px;transform:scaleY(1.04);transform-origin:0 84.65%;">Client générique TakePOS</span>
<span style="top:1299.7px;font-size:38.7px;line-height:38.7px;color:#2b7e8a;white-space:nowrap;-webkit-text-stroke:0.4px;right:1301px;transform:scaleY(1.04);transform-origin:0 84.65%;">31 680,00</span>
<span style="top:1299.7px;font-size:38.7px;line-height:38.7px;color:#2b7e8a;white-space:nowrap;-webkit-text-stroke:0.4px;right:946px;transform:scaleY(1.04);transform-origin:0 84.65%;">31 680,00</span>
<svg style="left:4075px;top:1298.3749999999998px;" width="50" height="55" viewBox="0 0 50 55" preserveAspectRatio="none"><path d="M2.500 47 Q3 40 17 38.500 L33 38.500 Q48 40 48.500 47 Q46 54.500 25.500 54.500 Q5 54.500 2.500 47z" fill="url(#jk)"/>
<path d="M18.500 36 L25.500 53 L32.500 36z" fill="#f8ca8c"/>
<path d="M25 0.500 C12 0.500 9.500 12 10.500 23 C10.800 30 7 33.500 1.500 32.500 C4 39 14 40.500 19 37 L32 37 C39 40 43.500 36 42.500 24 C43.500 11 38 0.500 25 0.500z" fill="#b3720f"/>
<ellipse cx="26.500" cy="23.500" rx="10.500" ry="13.500" fill="url(#sk)"/>
<path d="M13 25 C13 12 26 7 38 13.500 C35 4.500 15 3 13 25z" fill="#9a5f0a"/></svg>
<span style="top:1302.1px;font-size:38.7px;line-height:38.7px;color:#0a1464;white-space:nowrap;-webkit-text-stroke:0.4px;left:4135.5px;transform:scaleY(1.04);transform-origin:0 84.65%;">SuperAdmin</span>
<div style="left:4535.0px;top:1292.9749999999997px;width:250px;height:56px;background:#fff;border:3px solid #bb9a2a;border-radius:9px;box-sizing:border-box;"></div>
<span style="top:1299.9px;font-size:36.5px;line-height:36.5px;color:#a98817;white-space:nowrap;font-weight:bold;left:4660px;transform:translateX(-50%) scaleY(1.08);transform-origin:0 84.65%;">Commencée</span>
<div style="left:191px;top:1423.6249999999998px;width:43px;height:43px;background:#fff;border:3px solid #9996ac;border-radius:6px;box-sizing:border-box"></div>
<svg style="left:347.5px;top:1426.8249999999998px;" width="30.5" height="40.5" viewBox="0 0 384 512" fill="#6b9a3a" preserveAspectRatio="none"><path d="M377 105L279.1 7c-4.5-4.5-10.6-7-17-7H256v128h128v-6.1c0-6.3-2.5-12.4-7-16.9zm-153 31V0H24C10.7 0 0 10.7 0 24v464c0 13.3 10.7 24 24 24h336c13.3 0 24-10.7 24-24V160H248c-13.2 0-24-10.8-24-24zM64 72c0-4.42 3.58-8 8-8h80c4.42 0 8 3.58 8 8v16c0 4.42-3.58 8-8 8H72c-4.42 0-8-3.58-8-8V72zm0 80v-16c0-4.42 3.58-8 8-8h80c4.42 0 8 3.58 8 8v16c0 4.42-3.58 8-8 8H72c-4.42 0-8-3.58-8-8zm144 263.88V440c0 4.42-3.58 8-8 8h-16c-4.42 0-8-3.58-8-8v-24.29c-11.29-.58-22.27-4.52-31.37-11.35-3.9-2.93-4.1-8.77-.57-12.14l11.75-11.21c2.77-2.64 6.89-2.76 10.13-.73 3.87 2.42 8.26 3.72 12.82 3.72h28.11c6.5 0 11.8-5.92 11.8-13.19 0-5.95-3.61-11.19-8.77-12.73l-45-13.5c-18.59-5.58-31.58-23.42-31.58-43.39 0-24.52 19.05-44.44 42.67-45.07V232c0-4.42 3.58-8 8-8h16c4.42 0 8 3.58 8 8v24.29c11.29.58 22.27 4.51 31.37 11.35 3.9 2.93 4.1 8.77.57 12.14l-11.75 11.21c-2.77 2.64-6.89 2.76-10.13.73-3.87-2.43-8.26-3.72-12.82-3.72h-28.11c-6.5 0-11.8 5.92-11.8 13.19 0 5.95 3.61 11.19 8.77 12.73l45 13.5c18.59 5.58 31.58 23.42 31.58 43.39 0 24.53-19.05 44.44-42.67 45.07z"/></svg>
<span style="top:1429.1px;font-size:38.7px;line-height:38.7px;color:#0a1464;white-space:nowrap;-webkit-text-stroke:0.4px;left:388.5px;transform:scaleY(1.04);transform-origin:0 84.65%;">FA2508-0002</span>
<span style="top:1429.1px;font-size:38.7px;line-height:38.7px;color:#2b2622;white-space:nowrap;-webkit-text-stroke:0.4px;left:1213px;transform:translateX(-50%) scaleY(1.04);transform-origin:0 84.65%;">15/08/2025</span>
<span style="top:1429.1px;font-size:38.7px;line-height:38.7px;color:#2b2622;white-space:nowrap;-webkit-text-stroke:0.4px;left:1895px;transform:scaleY(1.04);transform-origin:0 84.65%;">15/08/2025</span>
<svg style="left:2094px;top:1426.8249999999998px;" width="44" height="39" viewBox="0 0 576 512" fill="#c39c2b" preserveAspectRatio="none"><path d="M569.517 440.013C587.975 472.007 564.806 512 527.94 512H48.054c-36.937 0-59.999-40.055-41.577-71.987L246.423 23.985c18.467-32.009 64.72-31.951 83.154 0l239.94 416.028zM288 354c-25.405 0-46 20.595-46 46s20.595 46 46 46 46-20.595 46-46-20.595-46-46-46zm-43.673-165.346l7.418 136c.347 6.364 5.609 11.346 11.982 11.346h48.546c6.373 0 11.635-4.982 11.982-11.346l7.418-136c.375-6.874-5.098-12.654-11.982-12.654h-63.383c-6.884 0-12.356 5.78-11.981 12.654z"/></svg>
<svg style="left:2413px;top:1433.8249999999998px;" width="39" height="32" viewBox="0 0 39 32" preserveAspectRatio="none"><g fill="#6a66b1"><rect x="0" y="1" width="12" height="11" rx="1.500"/><rect x="27" y="1" width="12" height="11" rx="1.500"/><rect x="14" y="20" width="12" height="11" rx="1.500"/><path d="M11 4.500H28V8.500H11z"/><path d="M13.500 7L20.500 21L17 22.500L10 8.500z"/></g></svg>
<span style="top:1429.6px;font-size:38.7px;line-height:38.7px;color:#0a1464;white-space:nowrap;-webkit-text-stroke:0.4px;left:2467.5px;transform:scaleY(1.04);transform-origin:0 84.65%;">PJ2508-0003</span>
<svg style="left:2799px;top:1429.8249999999998px;" width="33" height="39" viewBox="0 0 448 512" fill="#6e6ab6" preserveAspectRatio="none"><path d="M436 480h-20V24c0-13.255-10.745-24-24-24H56C42.745 0 32 10.745 32 24v456H12c-6.627 0-12 5.373-12 12v20h448v-20c0-6.627-5.373-12-12-12zM128 76c0-6.627 5.373-12 12-12h40c6.627 0 12 5.373 12 12v40c0 6.627-5.373 12-12 12h-40c-6.627 0-12-5.373-12-12V76zm0 96c0-6.627 5.373-12 12-12h40c6.627 0 12 5.373 12 12v40c0 6.627-5.373 12-12 12h-40c-6.627 0-12-5.373-12-12v-40zm52 148h-40c-6.627 0-12-5.373-12-12v-40c0-6.627 5.373-12 12-12h40c6.627 0 12 5.373 12 12v40c0 6.627-5.373 12-12 12zm76 160h-64v-84c0-6.627 5.373-12 12-12h40c6.627 0 12 5.373 12 12v84zm64-172c0 6.627-5.373 12-12 12h-40c-6.627 0-12-5.373-12-12v-40c0-6.627 5.373-12 12-12h40c6.627 0 12 5.373 12 12v40zm0-96c0 6.627-5.373 12-12 12h-40c-6.627 0-12-5.373-12-12v-40c0-6.627 5.373-12 12-12h40c6.627 0 12 5.373 12 12v40zm0-96c0 6.627-5.373 12-12 12h-40c-6.627 0-12-5.373-12-12V76c0-6.627 5.373-12 12-12h40c6.627 0 12 5.373 12 12v40z"/></svg>
<span style="top:1431.5px;font-size:38.7px;line-height:38.7px;color:#0a1464;white-space:nowrap;-webkit-text-stroke:0.4px;left:2845px;transform:scaleY(1.04);transform-origin:0 84.65%;">Client générique TakePOS</span>
<span style="top:1429.1px;font-size:38.7px;line-height:38.7px;color:#2b7e8a;white-space:nowrap;-webkit-text-stroke:0.4px;right:1301px;transform:scaleY(1.04);transform-origin:0 84.65%;">2 500,00</span>
<span style="top:1429.1px;font-size:38.7px;line-height:38.7px;color:#2b7e8a;white-space:nowrap;-webkit-text-stroke:0.4px;right:946px;transform:scaleY(1.04);transform-origin:0 84.65%;">2 500,00</span>
<svg style="left:4075px;top:1427.8249999999998px;" width="50" height="55" viewBox="0 0 50 55" preserveAspectRatio="none"><path d="M2.500 47 Q3 40 17 38.500 L33 38.500 Q48 40 48.500 47 Q46 54.500 25.500 54.500 Q5 54.500 2.500 47z" fill="url(#jk)"/>
<path d="M18.500 36 L25.500 53 L32.500 36z" fill="#f8ca8c"/>
<path d="M25 0.500 C12 0.500 9.500 12 10.500 23 C10.800 30 7 33.500 1.500 32.500 C4 39 14 40.500 19 37 L32 37 C39 40 43.500 36 42.500 24 C43.500 11 38 0.500 25 0.500z" fill="#b3720f"/>
<ellipse cx="26.500" cy="23.500" rx="10.500" ry="13.500" fill="url(#sk)"/>
<path d="M13 25 C13 12 26 7 38 13.500 C35 4.500 15 3 13 25z" fill="#9a5f0a"/></svg>
<span style="top:1431.5px;font-size:38.7px;line-height:38.7px;color:#0a1464;white-space:nowrap;-webkit-text-stroke:0.4px;left:4135.5px;transform:scaleY(1.04);transform-origin:0 84.65%;">SuperAdmin</span>
<div style="left:4535.0px;top:1422.4249999999997px;width:250px;height:56px;background:#fff;border:3px solid #bb9a2a;border-radius:9px;box-sizing:border-box;"></div>
<span style="top:1429.3px;font-size:36.5px;line-height:36.5px;color:#a98817;white-space:nowrap;font-weight:bold;left:4660px;transform:translateX(-50%) scaleY(1.08);transform-origin:0 84.65%;">Commencée</span>
<div style="left:191px;top:1553.0749999999998px;width:43px;height:43px;background:#fff;border:3px solid #9996ac;border-radius:6px;box-sizing:border-box"></div>
<svg style="left:347.5px;top:1556.2749999999999px;" width="30.5" height="40.5" viewBox="0 0 384 512" fill="#6b9a3a" preserveAspectRatio="none"><path d="M377 105L279.1 7c-4.5-4.5-10.6-7-17-7H256v128h128v-6.1c0-6.3-2.5-12.4-7-16.9zm-153 31V0H24C10.7 0 0 10.7 0 24v464c0 13.3 10.7 24 24 24h336c13.3 0 24-10.7 24-24V160H248c-13.2 0-24-10.8-24-24zM64 72c0-4.42 3.58-8 8-8h80c4.42 0 8 3.58 8 8v16c0 4.42-3.58 8-8 8H72c-4.42 0-8-3.58-8-8V72zm0 80v-16c0-4.42 3.58-8 8-8h80c4.42 0 8 3.58 8 8v16c0 4.42-3.58 8-8 8H72c-4.42 0-8-3.58-8-8zm144 263.88V440c0 4.42-3.58 8-8 8h-16c-4.42 0-8-3.58-8-8v-24.29c-11.29-.58-22.27-4.52-31.37-11.35-3.9-2.93-4.1-8.77-.57-12.14l11.75-11.21c2.77-2.64 6.89-2.76 10.13-.73 3.87 2.42 8.26 3.72 12.82 3.72h28.11c6.5 0 11.8-5.92 11.8-13.19 0-5.95-3.61-11.19-8.77-12.73l-45-13.5c-18.59-5.58-31.58-23.42-31.58-43.39 0-24.52 19.05-44.44 42.67-45.07V232c0-4.42 3.58-8 8-8h16c4.42 0 8 3.58 8 8v24.29c11.29.58 22.27 4.51 31.37 11.35 3.9 2.93 4.1 8.77.57 12.14l-11.75 11.21c-2.77 2.64-6.89 2.76-10.13.73-3.87-2.43-8.26-3.72-12.82-3.72h-28.11c-6.5 0-11.8 5.92-11.8 13.19 0 5.95 3.61 11.19 8.77 12.73l45 13.5c18.59 5.58 31.58 23.42 31.58 43.39 0 24.53-19.05 44.44-42.67 45.07z"/></svg>
<span style="top:1558.6px;font-size:38.7px;line-height:38.7px;color:#0a1464;white-space:nowrap;-webkit-text-stroke:0.4px;left:388.5px;transform:scaleY(1.04);transform-origin:0 84.65%;">IN2508-0003</span>
<svg style="left:617.5px;top:1559.7749999999999px;" width="41" height="39" viewBox="0 0 512 512" fill="#a3a3a3" preserveAspectRatio="none"><path d="M216 0h80c13.3 0 24 10.7 24 24v168h87.7c17.8 0 26.7 21.5 14.1 34.1L269.7 378.3c-7.5 7.5-19.8 7.5-27.3 0L90.1 226.1c-12.6-12.6-3.7-34.1 14.1-34.1H192V24c0-13.3 10.7-24 24-24zm296 376v112c0 13.3-10.7 24-24 24H24c-13.3 0-24-10.7-24-24V376c0-13.3 10.7-24 24-24h146.7l49 49c20.1 20.1 52.5 20.1 72.6 0l49-49H488c13.3 0 24 10.7 24 24zm-124 88c0-11-9-20-20-20s-20 9-20 20 9 20 20 20 20-9 20-20zm64 0c0-11-9-20-20-20s-20 9-20 20 9 20 20 20 20-9 20-20z"/></svg>
<span style="top:1558.6px;font-size:38.7px;line-height:38.7px;color:#2b2622;white-space:nowrap;-webkit-text-stroke:0.4px;left:1213px;transform:translateX(-50%) scaleY(1.04);transform-origin:0 84.65%;">14/08/2025</span>
<span style="top:1558.6px;font-size:38.7px;line-height:38.7px;color:#2b2622;white-space:nowrap;-webkit-text-stroke:0.4px;left:1895px;transform:scaleY(1.04);transform-origin:0 84.65%;">15/08/2025</span>
<svg style="left:2094px;top:1556.2749999999999px;" width="44" height="39" viewBox="0 0 576 512" fill="#c39c2b" preserveAspectRatio="none"><path d="M569.517 440.013C587.975 472.007 564.806 512 527.94 512H48.054c-36.937 0-59.999-40.055-41.577-71.987L246.423 23.985c18.467-32.009 64.72-31.951 83.154 0l239.94 416.028zM288 354c-25.405 0-46 20.595-46 46s20.595 46 46 46 46-20.595 46-46-20.595-46-46-46zm-43.673-165.346l7.418 136c.347 6.364 5.609 11.346 11.982 11.346h48.546c6.373 0 11.635-4.982 11.982-11.346l7.418-136c.375-6.874-5.098-12.654-11.982-12.654h-63.383c-6.884 0-12.356 5.78-11.981 12.654z"/></svg>
<svg style="left:2799px;top:1559.2749999999999px;" width="33" height="39" viewBox="0 0 448 512" fill="#6e6ab6" preserveAspectRatio="none"><path d="M436 480h-20V24c0-13.255-10.745-24-24-24H56C42.745 0 32 10.745 32 24v456H12c-6.627 0-12 5.373-12 12v20h448v-20c0-6.627-5.373-12-12-12zM128 76c0-6.627 5.373-12 12-12h40c6.627 0 12 5.373 12 12v40c0 6.627-5.373 12-12 12h-40c-6.627 0-12-5.373-12-12V76zm0 96c0-6.627 5.373-12 12-12h40c6.627 0 12 5.373 12 12v40c0 6.627-5.373 12-12 12h-40c-6.627 0-12-5.373-12-12v-40zm52 148h-40c-6.627 0-12-5.373-12-12v-40c0-6.627 5.373-12 12-12h40c6.627 0 12 5.373 12 12v40c0 6.627-5.373 12-12 12zm76 160h-64v-84c0-6.627 5.373-12 12-12h40c6.627 0 12 5.373 12 12v84zm64-172c0 6.627-5.373 12-12 12h-40c-6.627 0-12-5.373-12-12v-40c0-6.627 5.373-12 12-12h40c6.627 0 12 5.373 12 12v40zm0-96c0 6.627-5.373 12-12 12h-40c-6.627 0-12-5.373-12-12v-40c0-6.627 5.373-12 12-12h40c6.627 0 12 5.373 12 12v40zm0-96c0 6.627-5.373 12-12 12h-40c-6.627 0-12-5.373-12-12V76c0-6.627 5.373-12 12-12h40c6.627 0 12 5.373 12 12v40z"/></svg>
<span style="top:1561.0px;font-size:38.7px;line-height:38.7px;color:#0a1464;white-space:nowrap;-webkit-text-stroke:0.4px;left:2845px;transform:scaleY(1.04);transform-origin:0 84.65%;">Client générique TakePOS</span>
<span style="top:1558.6px;font-size:38.7px;line-height:38.7px;color:#2b7e8a;white-space:nowrap;-webkit-text-stroke:0.4px;right:1301px;transform:scaleY(1.04);transform-origin:0 84.65%;">42 500,00</span>
<span style="top:1558.6px;font-size:38.7px;line-height:38.7px;color:#2b7e8a;white-space:nowrap;-webkit-text-stroke:0.4px;right:946px;transform:scaleY(1.04);transform-origin:0 84.65%;">42 500,00</span>
<svg style="left:4075px;top:1557.2749999999999px;" width="50" height="55" viewBox="0 0 50 55" preserveAspectRatio="none"><path d="M2.500 47 Q3 40 17 38.500 L33 38.500 Q48 40 48.500 47 Q46 54.500 25.500 54.500 Q5 54.500 2.500 47z" fill="url(#jk)"/>
<path d="M18.500 36 L25.500 53 L32.500 36z" fill="#f8ca8c"/>
<path d="M25 0.500 C12 0.500 9.500 12 10.500 23 C10.800 30 7 33.500 1.500 32.500 C4 39 14 40.500 19 37 L32 37 C39 40 43.500 36 42.500 24 C43.500 11 38 0.500 25 0.500z" fill="#b3720f"/>
<ellipse cx="26.500" cy="23.500" rx="10.500" ry="13.500" fill="url(#sk)"/>
<path d="M13 25 C13 12 26 7 38 13.500 C35 4.500 15 3 13 25z" fill="#9a5f0a"/></svg>
<span style="top:1561.0px;font-size:38.7px;line-height:38.7px;color:#0a1464;white-space:nowrap;-webkit-text-stroke:0.4px;left:4135.5px;transform:scaleY(1.04);transform-origin:0 84.65%;">SuperAdmin</span>
<div style="left:4535.0px;top:1551.8749999999998px;width:250px;height:56px;background:#fff;border:3px solid #bb9a2a;border-radius:9px;box-sizing:border-box;"></div>
<span style="top:1558.8px;font-size:36.5px;line-height:36.5px;color:#a98817;white-space:nowrap;font-weight:bold;left:4660px;transform:translateX(-50%) scaleY(1.08);transform-origin:0 84.65%;">Commencée</span>
<div style="left:191px;top:1682.5249999999999px;width:43px;height:43px;background:#fff;border:3px solid #9996ac;border-radius:6px;box-sizing:border-box"></div>
<svg style="left:347.5px;top:1685.725px;" width="30.5" height="40.5" viewBox="0 0 384 512" fill="#6b9a3a" preserveAspectRatio="none"><path d="M377 105L279.1 7c-4.5-4.5-10.6-7-17-7H256v128h128v-6.1c0-6.3-2.5-12.4-7-16.9zm-153 31V0H24C10.7 0 0 10.7 0 24v464c0 13.3 10.7 24 24 24h336c13.3 0 24-10.7 24-24V160H248c-13.2 0-24-10.8-24-24zM64 72c0-4.42 3.58-8 8-8h80c4.42 0 8 3.58 8 8v16c0 4.42-3.58 8-8 8H72c-4.42 0-8-3.58-8-8V72zm0 80v-16c0-4.42 3.58-8 8-8h80c4.42 0 8 3.58 8 8v16c0 4.42-3.58 8-8 8H72c-4.42 0-8-3.58-8-8zm144 263.88V440c0 4.42-3.58 8-8 8h-16c-4.42 0-8-3.58-8-8v-24.29c-11.29-.58-22.27-4.52-31.37-11.35-3.9-2.93-4.1-8.77-.57-12.14l11.75-11.21c2.77-2.64 6.89-2.76 10.13-.73 3.87 2.42 8.26 3.72 12.82 3.72h28.11c6.5 0 11.8-5.92 11.8-13.19 0-5.95-3.61-11.19-8.77-12.73l-45-13.5c-18.59-5.58-31.58-23.42-31.58-43.39 0-24.52 19.05-44.44 42.67-45.07V232c0-4.42 3.58-8 8-8h16c4.42 0 8 3.58 8 8v24.29c11.29.58 22.27 4.51 31.37 11.35 3.9 2.93 4.1 8.77.57 12.14l-11.75 11.21c-2.77 2.64-6.89 2.76-10.13.73-3.87-2.43-8.26-3.72-12.82-3.72h-28.11c-6.5 0-11.8 5.92-11.8 13.19 0 5.95 3.61 11.19 8.77 12.73l45 13.5c18.59 5.58 31.58 23.42 31.58 43.39 0 24.53-19.05 44.44-42.67 45.07z"/></svg>
<span style="top:1688.0px;font-size:38.7px;line-height:38.7px;color:#0a1464;white-space:nowrap;-webkit-text-stroke:0.4px;left:388.5px;transform:scaleY(1.04);transform-origin:0 84.65%;">FA2508-0001</span>
<svg style="left:624.5px;top:1689.225px;" width="41" height="39" viewBox="0 0 512 512" fill="#a3a3a3" preserveAspectRatio="none"><path d="M216 0h80c13.3 0 24 10.7 24 24v168h87.7c17.8 0 26.7 21.5 14.1 34.1L269.7 378.3c-7.5 7.5-19.8 7.5-27.3 0L90.1 226.1c-12.6-12.6-3.7-34.1 14.1-34.1H192V24c0-13.3 10.7-24 24-24zm296 376v112c0 13.3-10.7 24-24 24H24c-13.3 0-24-10.7-24-24V376c0-13.3 10.7-24 24-24h146.7l49 49c20.1 20.1 52.5 20.1 72.6 0l49-49H488c13.3 0 24 10.7 24 24zm-124 88c0-11-9-20-20-20s-20 9-20 20 9 20 20 20 20-9 20-20zm64 0c0-11-9-20-20-20s-20 9-20 20 9 20 20 20 20-9 20-20z"/></svg>
<span style="top:1688.0px;font-size:38.7px;line-height:38.7px;color:#2b2622;white-space:nowrap;-webkit-text-stroke:0.4px;left:1213px;transform:translateX(-50%) scaleY(1.04);transform-origin:0 84.65%;">14/08/2025</span>
<span style="top:1688.0px;font-size:38.7px;line-height:38.7px;color:#2b2622;white-space:nowrap;-webkit-text-stroke:0.4px;left:1895px;transform:scaleY(1.04);transform-origin:0 84.65%;">15/08/2025</span>
<svg style="left:2094px;top:1685.725px;" width="44" height="39" viewBox="0 0 576 512" fill="#c39c2b" preserveAspectRatio="none"><path d="M569.517 440.013C587.975 472.007 564.806 512 527.94 512H48.054c-36.937 0-59.999-40.055-41.577-71.987L246.423 23.985c18.467-32.009 64.72-31.951 83.154 0l239.94 416.028zM288 354c-25.405 0-46 20.595-46 46s20.595 46 46 46 46-20.595 46-46-20.595-46-46-46zm-43.673-165.346l7.418 136c.347 6.364 5.609 11.346 11.982 11.346h48.546c6.373 0 11.635-4.982 11.982-11.346l7.418-136c.375-6.874-5.098-12.654-11.982-12.654h-63.383c-6.884 0-12.356 5.78-11.981 12.654z"/></svg>
<svg style="left:2799px;top:1688.725px;" width="33" height="39" viewBox="0 0 448 512" fill="#6e6ab6" preserveAspectRatio="none"><path d="M436 480h-20V24c0-13.255-10.745-24-24-24H56C42.745 0 32 10.745 32 24v456H12c-6.627 0-12 5.373-12 12v20h448v-20c0-6.627-5.373-12-12-12zM128 76c0-6.627 5.373-12 12-12h40c6.627 0 12 5.373 12 12v40c0 6.627-5.373 12-12 12h-40c-6.627 0-12-5.373-12-12V76zm0 96c0-6.627 5.373-12 12-12h40c6.627 0 12 5.373 12 12v40c0 6.627-5.373 12-12 12h-40c-6.627 0-12-5.373-12-12v-40zm52 148h-40c-6.627 0-12-5.373-12-12v-40c0-6.627 5.373-12 12-12h40c6.627 0 12 5.373 12 12v40c0 6.627-5.373 12-12 12zm76 160h-64v-84c0-6.627 5.373-12 12-12h40c6.627 0 12 5.373 12 12v84zm64-172c0 6.627-5.373 12-12 12h-40c-6.627 0-12-5.373-12-12v-40c0-6.627 5.373-12 12-12h40c6.627 0 12 5.373 12 12v40zm0-96c0 6.627-5.373 12-12 12h-40c-6.627 0-12-5.373-12-12v-40c0-6.627 5.373-12 12-12h40c6.627 0 12 5.373 12 12v40zm0-96c0 6.627-5.373 12-12 12h-40c-6.627 0-12-5.373-12-12V76c0-6.627 5.373-12 12-12h40c6.627 0 12 5.373 12 12v40z"/></svg>
<span style="top:1690.4px;font-size:38.7px;line-height:38.7px;color:#0a1464;white-space:nowrap;-webkit-text-stroke:0.4px;left:2845px;transform:scaleY(1.04);transform-origin:0 84.65%;">Client générique TakePOS</span>
<span style="top:1688.0px;font-size:38.7px;line-height:38.7px;color:#2b7e8a;white-space:nowrap;-webkit-text-stroke:0.4px;right:1301px;transform:scaleY(1.04);transform-origin:0 84.65%;">480 000,00</span>
<span style="top:1688.0px;font-size:38.7px;line-height:38.7px;color:#2b7e8a;white-space:nowrap;-webkit-text-stroke:0.4px;right:946px;transform:scaleY(1.04);transform-origin:0 84.65%;">480 000,00</span>
<svg style="left:4075px;top:1686.725px;" width="50" height="55" viewBox="0 0 50 55" preserveAspectRatio="none"><path d="M2.500 47 Q3 40 17 38.500 L33 38.500 Q48 40 48.500 47 Q46 54.500 25.500 54.500 Q5 54.500 2.500 47z" fill="url(#jk)"/>
<path d="M18.500 36 L25.500 53 L32.500 36z" fill="#f8ca8c"/>
<path d="M25 0.500 C12 0.500 9.500 12 10.500 23 C10.800 30 7 33.500 1.500 32.500 C4 39 14 40.500 19 37 L32 37 C39 40 43.500 36 42.500 24 C43.500 11 38 0.500 25 0.500z" fill="#b3720f"/>
<ellipse cx="26.500" cy="23.500" rx="10.500" ry="13.500" fill="url(#sk)"/>
<path d="M13 25 C13 12 26 7 38 13.500 C35 4.500 15 3 13 25z" fill="#9a5f0a"/></svg>
<span style="top:1690.4px;font-size:38.7px;line-height:38.7px;color:#0a1464;white-space:nowrap;-webkit-text-stroke:0.4px;left:4135.5px;transform:scaleY(1.04);transform-origin:0 84.65%;">SuperAdmin</span>
<div style="left:4535.0px;top:1681.3249999999998px;width:250px;height:56px;background:#fff;border:3px solid #bb9a2a;border-radius:9px;box-sizing:border-box;"></div>
<span style="top:1688.2px;font-size:36.5px;line-height:36.5px;color:#a98817;white-space:nowrap;font-weight:bold;left:4660px;transform:translateX(-50%) scaleY(1.08);transform-origin:0 84.65%;">Commencée</span>
<div style="left:191px;top:1811.9749999999997px;width:43px;height:43px;background:#0b64e0;border-radius:7px"><svg style="left:6px;top:8px" width="31" height="27" viewBox="0 0 31 27"><path d="M4 14 L12 22 L27 5" fill="none" stroke="#fff" stroke-width="5.500" stroke-linecap="round" stroke-linejoin="round"/></svg></div>
<svg style="left:347.5px;top:1815.1749999999997px;" width="30.5" height="40.5" viewBox="0 0 384 512" fill="#6b9a3a" preserveAspectRatio="none"><path d="M377 105L279.1 7c-4.5-4.5-10.6-7-17-7H256v128h128v-6.1c0-6.3-2.5-12.4-7-16.9zm-153 31V0H24C10.7 0 0 10.7 0 24v464c0 13.3 10.7 24 24 24h336c13.3 0 24-10.7 24-24V160H248c-13.2 0-24-10.8-24-24zM64 72c0-4.42 3.58-8 8-8h80c4.42 0 8 3.58 8 8v16c0 4.42-3.58 8-8 8H72c-4.42 0-8-3.58-8-8V72zm0 80v-16c0-4.42 3.58-8 8-8h80c4.42 0 8 3.58 8 8v16c0 4.42-3.58 8-8 8H72c-4.42 0-8-3.58-8-8zm144 263.88V440c0 4.42-3.58 8-8 8h-16c-4.42 0-8-3.58-8-8v-24.29c-11.29-.58-22.27-4.52-31.37-11.35-3.9-2.93-4.1-8.77-.57-12.14l11.75-11.21c2.77-2.64 6.89-2.76 10.13-.73 3.87 2.42 8.26 3.72 12.82 3.72h28.11c6.5 0 11.8-5.92 11.8-13.19 0-5.95-3.61-11.19-8.77-12.73l-45-13.5c-18.59-5.58-31.58-23.42-31.58-43.39 0-24.52 19.05-44.44 42.67-45.07V232c0-4.42 3.58-8 8-8h16c4.42 0 8 3.58 8 8v24.29c11.29.58 22.27 4.51 31.37 11.35 3.9 2.93 4.1 8.77.57 12.14l-11.75 11.21c-2.77 2.64-6.89 2.76-10.13.73-3.87-2.43-8.26-3.72-12.82-3.72h-28.11c-6.5 0-11.8 5.92-11.8 13.19 0 5.95 3.61 11.19 8.77 12.73l45 13.5c18.59 5.58 31.58 23.42 31.58 43.39 0 24.53-19.05 44.44-42.67 45.07z"/></svg>
<span style="top:1817.5px;font-size:38.7px;line-height:38.7px;color:#0a1464;white-space:nowrap;-webkit-text-stroke:0.4px;left:388.5px;transform:scaleY(1.04);transform-origin:0 84.65%;">IN2508-0001</span>
<svg style="left:617.5px;top:1818.6749999999997px;" width="41" height="39" viewBox="0 0 512 512" fill="#a3a3a3" preserveAspectRatio="none"><path d="M216 0h80c13.3 0 24 10.7 24 24v168h87.7c17.8 0 26.7 21.5 14.1 34.1L269.7 378.3c-7.5 7.5-19.8 7.5-27.3 0L90.1 226.1c-12.6-12.6-3.7-34.1 14.1-34.1H192V24c0-13.3 10.7-24 24-24zm296 376v112c0 13.3-10.7 24-24 24H24c-13.3 0-24-10.7-24-24V376c0-13.3 10.7-24 24-24h146.7l49 49c20.1 20.1 52.5 20.1 72.6 0l49-49H488c13.3 0 24 10.7 24 24zm-124 88c0-11-9-20-20-20s-20 9-20 20 9 20 20 20 20-9 20-20zm64 0c0-11-9-20-20-20s-20 9-20 20 9 20 20 20 20-9 20-20z"/></svg>
<span style="top:1817.5px;font-size:38.7px;line-height:38.7px;color:#2b2622;white-space:nowrap;-webkit-text-stroke:0.4px;left:1213px;transform:translateX(-50%) scaleY(1.04);transform-origin:0 84.65%;">12/08/2025</span>
<span style="top:1817.5px;font-size:38.7px;line-height:38.7px;color:#2b2622;white-space:nowrap;-webkit-text-stroke:0.4px;left:2015px;transform:translateX(-50%) scaleY(1.04);transform-origin:0 84.65%;">13/08/2025</span>
<svg style="left:2799px;top:1818.1749999999997px;" width="33" height="39" viewBox="0 0 448 512" fill="#6e6ab6" preserveAspectRatio="none"><path d="M436 480h-20V24c0-13.255-10.745-24-24-24H56C42.745 0 32 10.745 32 24v456H12c-6.627 0-12 5.373-12 12v20h448v-20c0-6.627-5.373-12-12-12zM128 76c0-6.627 5.373-12 12-12h40c6.627 0 12 5.373 12 12v40c0 6.627-5.373 12-12 12h-40c-6.627 0-12-5.373-12-12V76zm0 96c0-6.627 5.373-12 12-12h40c6.627 0 12 5.373 12 12v40c0 6.627-5.373 12-12 12h-40c-6.627 0-12-5.373-12-12v-40zm52 148h-40c-6.627 0-12-5.373-12-12v-40c0-6.627 5.373-12 12-12h40c6.627 0 12 5.373 12 12v40c0 6.627-5.373 12-12 12zm76 160h-64v-84c0-6.627 5.373-12 12-12h40c6.627 0 12 5.373 12 12v84zm64-172c0 6.627-5.373 12-12 12h-40c-6.627 0-12-5.373-12-12v-40c0-6.627 5.373-12 12-12h40c6.627 0 12 5.373 12 12v40zm0-96c0 6.627-5.373 12-12 12h-40c-6.627 0-12-5.373-12-12v-40c0-6.627 5.373-12 12-12h40c6.627 0 12 5.373 12 12v40zm0-96c0 6.627-5.373 12-12 12h-40c-6.627 0-12-5.373-12-12V76c0-6.627 5.373-12 12-12h40c6.627 0 12 5.373 12 12v40z"/></svg>
<span style="top:1819.9px;font-size:38.7px;line-height:38.7px;color:#0a1464;white-space:nowrap;-webkit-text-stroke:0.4px;left:2845px;transform:scaleY(1.04);transform-origin:0 84.65%;">Client générique TakePOS</span>
<span style="top:1817.5px;font-size:38.7px;line-height:38.7px;color:#2b7e8a;white-space:nowrap;-webkit-text-stroke:0.4px;right:1301px;transform:scaleY(1.04);transform-origin:0 84.65%;">30 000,00</span>
<span style="top:1817.5px;font-size:38.7px;line-height:38.7px;color:#2b7e8a;white-space:nowrap;-webkit-text-stroke:0.4px;right:946px;transform:scaleY(1.04);transform-origin:0 84.65%;">30 000,00</span>
<svg style="left:4075px;top:1816.1749999999997px;" width="50" height="55" viewBox="0 0 50 55" preserveAspectRatio="none"><path d="M2.500 47 Q3 40 17 38.500 L33 38.500 Q48 40 48.500 47 Q46 54.500 25.500 54.500 Q5 54.500 2.500 47z" fill="url(#jk)"/>
<path d="M18.500 36 L25.500 53 L32.500 36z" fill="#f8ca8c"/>
<path d="M25 0.500 C12 0.500 9.500 12 10.500 23 C10.800 30 7 33.500 1.500 32.500 C4 39 14 40.500 19 37 L32 37 C39 40 43.500 36 42.500 24 C43.500 11 38 0.500 25 0.500z" fill="#b3720f"/>
<ellipse cx="26.500" cy="23.500" rx="10.500" ry="13.500" fill="url(#sk)"/>
<path d="M13 25 C13 12 26 7 38 13.500 C35 4.500 15 3 13 25z" fill="#9a5f0a"/></svg>
<span style="top:1819.9px;font-size:38.7px;line-height:38.7px;color:#0a1464;white-space:nowrap;-webkit-text-stroke:0.4px;left:4135.5px;transform:scaleY(1.04);transform-origin:0 84.65%;">SuperAdmin</span>
<div style="left:4591.5px;top:1810.7749999999996px;width:137px;height:56px;background:#cdd3d3;border-radius:9px;"></div>
<span style="top:1817.7px;font-size:36.5px;line-height:36.5px;color:#7b7f82;white-space:nowrap;font-weight:bold;left:4660px;transform:translateX(-50%) scaleY(1.08);transform-origin:0 84.65%;">Payée</span>
<div style="left:191px;top:1941.4249999999997px;width:43px;height:43px;background:#fff;border:3px solid #9996ac;border-radius:6px;box-sizing:border-box"></div>
<svg style="left:347.5px;top:1944.6249999999998px;" width="30.5" height="40.5" viewBox="0 0 384 512" fill="#6b9a3a" preserveAspectRatio="none"><path d="M377 105L279.1 7c-4.5-4.5-10.6-7-17-7H256v128h128v-6.1c0-6.3-2.5-12.4-7-16.9zm-153 31V0H24C10.7 0 0 10.7 0 24v464c0 13.3 10.7 24 24 24h336c13.3 0 24-10.7 24-24V160H248c-13.2 0-24-10.8-24-24zM64 72c0-4.42 3.58-8 8-8h80c4.42 0 8 3.58 8 8v16c0 4.42-3.58 8-8 8H72c-4.42 0-8-3.58-8-8V72zm0 80v-16c0-4.42 3.58-8 8-8h80c4.42 0 8 3.58 8 8v16c0 4.42-3.58 8-8 8H72c-4.42 0-8-3.58-8-8zm144 263.88V440c0 4.42-3.58 8-8 8h-16c-4.42 0-8-3.58-8-8v-24.29c-11.29-.58-22.27-4.52-31.37-11.35-3.9-2.93-4.1-8.77-.57-12.14l11.75-11.21c2.77-2.64 6.89-2.76 10.13-.73 3.87 2.42 8.26 3.72 12.82 3.72h28.11c6.5 0 11.8-5.92 11.8-13.19 0-5.95-3.61-11.19-8.77-12.73l-45-13.5c-18.59-5.58-31.58-23.42-31.58-43.39 0-24.52 19.05-44.44 42.67-45.07V232c0-4.42 3.58-8 8-8h16c4.42 0 8 3.58 8 8v24.29c11.29.58 22.27 4.51 31.37 11.35 3.9 2.93 4.1 8.77.57 12.14l-11.75 11.21c-2.77 2.64-6.89 2.76-10.13.73-3.87-2.43-8.26-3.72-12.82-3.72h-28.11c-6.5 0-11.8 5.92-11.8 13.19 0 5.95 3.61 11.19 8.77 12.73l45 13.5c18.59 5.58 31.58 23.42 31.58 43.39 0 24.53-19.05 44.44-42.67 45.07z"/></svg>
<span style="top:1946.9px;font-size:38.7px;line-height:38.7px;color:#0a1464;white-space:nowrap;-webkit-text-stroke:0.4px;left:388.5px;transform:scaleY(1.04);transform-origin:0 84.65%;">(PROV2)</span>
<svg style="left:556.0px;top:1947.6249999999998px;" width="36" height="34" viewBox="0 0 36 34" preserveAspectRatio="none"><path d="M5 2.500H31Q33.500 2.500 33.500 5V21L22 31.500H5Q2.500 31.500 2.500 29V5Q2.500 2.500 5 2.500z M33 21H24.500Q22 21 22 23.500V31" fill="#fff" stroke="#a9a9a9" stroke-width="3.500" stroke-linejoin="round"/></svg>
<span style="top:1946.9px;font-size:38.7px;line-height:38.7px;color:#2b2622;white-space:nowrap;-webkit-text-stroke:0.4px;left:1213px;transform:translateX(-50%) scaleY(1.04);transform-origin:0 84.65%;">12/08/2025</span>
<span style="top:1946.9px;font-size:38.7px;line-height:38.7px;color:#2b2622;white-space:nowrap;-webkit-text-stroke:0.4px;left:2015px;transform:translateX(-50%) scaleY(1.04);transform-origin:0 84.65%;">13/08/2025</span>
<svg style="left:2799px;top:1947.6249999999998px;" width="33" height="39" viewBox="0 0 448 512" fill="#6e6ab6" preserveAspectRatio="none"><path d="M436 480h-20V24c0-13.255-10.745-24-24-24H56C42.745 0 32 10.745 32 24v456H12c-6.627 0-12 5.373-12 12v20h448v-20c0-6.627-5.373-12-12-12zM128 76c0-6.627 5.373-12 12-12h40c6.627 0 12 5.373 12 12v40c0 6.627-5.373 12-12 12h-40c-6.627 0-12-5.373-12-12V76zm0 96c0-6.627 5.373-12 12-12h40c6.627 0 12 5.373 12 12v40c0 6.627-5.373 12-12 12h-40c-6.627 0-12-5.373-12-12v-40zm52 148h-40c-6.627 0-12-5.373-12-12v-40c0-6.627 5.373-12 12-12h40c6.627 0 12 5.373 12 12v40c0 6.627-5.373 12-12 12zm76 160h-64v-84c0-6.627 5.373-12 12-12h40c6.627 0 12 5.373 12 12v84zm64-172c0 6.627-5.373 12-12 12h-40c-6.627 0-12-5.373-12-12v-40c0-6.627 5.373-12 12-12h40c6.627 0 12 5.373 12 12v40zm0-96c0 6.627-5.373 12-12 12h-40c-6.627 0-12-5.373-12-12v-40c0-6.627 5.373-12 12-12h40c6.627 0 12 5.373 12 12v40zm0-96c0 6.627-5.373 12-12 12h-40c-6.627 0-12-5.373-12-12V76c0-6.627 5.373-12 12-12h40c6.627 0 12 5.373 12 12v40z"/></svg>
<span style="top:1949.3px;font-size:38.7px;line-height:38.7px;color:#0a1464;white-space:nowrap;-webkit-text-stroke:0.4px;left:2845px;transform:scaleY(1.04);transform-origin:0 84.65%;">Client générique TakePOS</span>
<span style="top:1946.9px;font-size:38.7px;line-height:38.7px;color:#2b7e8a;white-space:nowrap;-webkit-text-stroke:0.4px;right:1301px;transform:scaleY(1.04);transform-origin:0 84.65%;">0,00</span>
<span style="top:1946.9px;font-size:38.7px;line-height:38.7px;color:#2b7e8a;white-space:nowrap;-webkit-text-stroke:0.4px;right:946px;transform:scaleY(1.04);transform-origin:0 84.65%;">0,00</span>
<svg style="left:4075px;top:1945.6249999999998px;" width="50" height="55" viewBox="0 0 50 55" preserveAspectRatio="none"><path d="M2.500 47 Q3 40 17 38.500 L33 38.500 Q48 40 48.500 47 Q46 54.500 25.500 54.500 Q5 54.500 2.500 47z" fill="url(#jk)"/>
<path d="M18.500 36 L25.500 53 L32.500 36z" fill="#f8ca8c"/>
<path d="M25 0.500 C12 0.500 9.500 12 10.500 23 C10.800 30 7 33.500 1.500 32.500 C4 39 14 40.500 19 37 L32 37 C39 40 43.500 36 42.500 24 C43.500 11 38 0.500 25 0.500z" fill="#b3720f"/>
<ellipse cx="26.500" cy="23.500" rx="10.500" ry="13.500" fill="url(#sk)"/>
<path d="M13 25 C13 12 26 7 38 13.500 C35 4.500 15 3 13 25z" fill="#9a5f0a"/></svg>
<span style="top:1949.3px;font-size:38.7px;line-height:38.7px;color:#0a1464;white-space:nowrap;-webkit-text-stroke:0.4px;left:4135.5px;transform:scaleY(1.04);transform-origin:0 84.65%;">SuperAdmin</span>
<div style="left:4563.5px;top:1940.2249999999997px;width:193px;height:56px;background:#fff;border:2.5px solid #cfd6d9;border-radius:9px;box-sizing:border-box;"></div>
<span style="top:1947.1px;font-size:36.5px;line-height:36.5px;color:#a9a9b3;white-space:nowrap;font-weight:bold;left:4660px;transform:translateX(-50%) scaleY(1.08);transform-origin:0 84.65%;">Brouillon</span>
<span style="top:2075.6px;font-size:38.7px;line-height:38.7px;color:#8f8a94;white-space:nowrap;-webkit-text-stroke:0.4px;left:149px;transform:scaleY(1.04);transform-origin:0 84.65%;">Total</span>
<span style="top:2075.6px;font-size:38.7px;line-height:38.7px;color:#8f8a94;white-space:nowrap;-webkit-text-stroke:0.4px;right:1301px;transform:scaleY(1.04);transform-origin:0 84.65%;">2 451 680,00</span>
<span style="top:2075.6px;font-size:38.7px;line-height:38.7px;color:#8f8a94;white-space:nowrap;-webkit-text-stroke:0.4px;right:946px;transform:scaleY(1.04);transform-origin:0 84.65%;">2 451 680,00</span>
<div style="left:1473.5px;top:461px;width:729.0px;height:954.5px;background:#fff;border:2px solid #b0b0b0;border-top-color:#c8c8c8;box-sizing:border-box;border-radius:0 0 8px 8px;box-shadow:0 8px 22px rgba(0,0,0,0.17)"></div>
<div style="left:1499px;top:557px;width:677px;height:2px;background:#d0d0d0"></div>
<div style="left:1491px;top:575px;width:695px;height:94px;background:#dddddd"></div>
<span style="top:600.7px;font-size:38.7px;line-height:38.7px;color:#1c1c1c;white-space:nowrap;-webkit-text-stroke:0.4px;left:1511px;transform:scaleY(1.04);transform-origin:0 84.65%;">-- Sélectionner l'action --</span>
<div style="left:1491px;top:1303px;width:695px;height:96px;background:#27405f"></div>
<svg style="left:1511px;top:702px;" width="39" height="30" viewBox="0 0 39 30" preserveAspectRatio="none"><path d="M4 16 L14 26 L35.500 4" fill="none" stroke="#2fa98a" stroke-width="7.500"/></svg>
<span style="top:697.7px;font-size:38.7px;line-height:38.7px;color:#161616;white-space:nowrap;-webkit-text-stroke:0.4px;left:1565px;transform:scaleY(1.04);transform-origin:0 84.65%;">Valider</span>
<svg style="left:1509.5px;top:794px;" width="31" height="39" viewBox="0 0 31 39" preserveAspectRatio="none"><path d="M5.500 2H19L29 12V34Q29 37 26 37H5.500Q2.500 37 2.500 34V5Q2.500 2 5.500 2z" fill="#fff" stroke="#1d1d1d" stroke-width="4" stroke-linejoin="round"/><path d="M18.500 2.500V12.500H28.500" fill="none" stroke="#1d1d1d" stroke-width="3"/><path d="M7.500 30 C12 27 15 21 15.500 14.500 C16 21 20 26 24.500 27.500 C18 27 12 28 7.500 30z" fill="none" stroke="#1d1d1d" stroke-width="2.200" stroke-linejoin="round"/></svg>
<span style="top:794.7px;font-size:38.7px;line-height:38.7px;color:#161616;white-space:nowrap;-webkit-text-stroke:0.4px;left:1565px;transform:scaleY(1.04);transform-origin:0 84.65%;">Re-générer le PDF</span>
<svg style="left:1509.5px;top:891.5px;" width="31" height="39" viewBox="0 0 31 39" preserveAspectRatio="none"><path d="M5.500 2H19L29 12V34Q29 37 26 37H5.500Q2.500 37 2.500 34V5Q2.500 2 5.500 2z" fill="#fff" stroke="#1d1d1d" stroke-width="4" stroke-linejoin="round"/><path d="M18.500 2.500V12.500H28.500" fill="none" stroke="#1d1d1d" stroke-width="3"/><path d="M7.500 30 C12 27 15 21 15.500 14.500 C16 21 20 26 24.500 27.500 C18 27 12 28 7.500 30z" fill="none" stroke="#1d1d1d" stroke-width="2.200" stroke-linejoin="round"/></svg>
<span style="top:891.7px;font-size:38.7px;line-height:38.7px;color:#161616;white-space:nowrap;-webkit-text-stroke:0.4px;left:1565px;transform:scaleY(1.04);transform-origin:0 84.65%;">Fusion PDF</span>
<svg style="left:1511px;top:989.5px;" width="38.5" height="37" viewBox="0 0 38.5 37" preserveAspectRatio="none"><circle cx="19" cy="18.5" r="7" fill="none" stroke="#8b5c8e" stroke-width="5"/><path d="M26 10.5V21Q26 26 30.5 26Q35.5 25 35.5 18Q35 3 19 3Q3.500 3 3 18.500Q3.500 34 19 34Q25 34 29.500 31.500" fill="none" stroke="#8b5c8e" stroke-width="5" stroke-linecap="butt"/></svg>
<span style="top:988.7px;font-size:38.7px;line-height:38.7px;color:#161616;white-space:nowrap;-webkit-text-stroke:0.4px;left:1565px;transform:scaleY(1.04);transform-origin:0 84.65%;">Envoyer email</span>
<svg style="left:1509.5px;top:1091px;" width="43" height="29" viewBox="0 0 43 29" preserveAspectRatio="none"><rect x="0" y="0" width="43" height="29" rx="2.500" fill="#afba3d"/><text x="11.500" y="22" font-family="Liberation Sans" font-weight="bold" font-size="19" fill="#eef2c8" text-anchor="middle">$</text><path d="M20 10H38M20 17H29M32 17H38" stroke="#dfe6a4" stroke-width="2.500"/></svg>
<span style="top:1084.2px;font-size:38.7px;line-height:38.7px;color:#161616;white-space:nowrap;-webkit-text-stroke:0.4px;left:1565px;transform:scaleY(1.04);transform-origin:0 84.65%;">Enregistrer un paiement</span>
<svg style="left:1509.5px;top:1188px;" width="43" height="29" viewBox="0 0 43 29" preserveAspectRatio="none"><rect x="0" y="0" width="43" height="29" rx="2.500" fill="#afba3d"/><text x="11.500" y="22" font-family="Liberation Sans" font-weight="bold" font-size="19" fill="#eef2c8" text-anchor="middle">$</text><path d="M20 10H38M20 17H29M32 17H38" stroke="#dfe6a4" stroke-width="2.500"/></svg>
<span style="top:1180.9px;font-size:38.7px;line-height:38.7px;color:#161616;white-space:nowrap;-webkit-text-stroke:0.4px;left:1565px;transform:scaleY(1.04);transform-origin:0 84.65%;">Préparer un paiement par</span>
<span style="top:1236.5px;font-size:38.7px;line-height:38.7px;color:#161616;white-space:nowrap;-webkit-text-stroke:0.4px;left:1511px;transform:scaleY(1.04);transform-origin:0 84.65%;">prélèvement</span>
<svg style="left:1510px;top:1329px;" width="42" height="41" viewBox="0 0 42 41" preserveAspectRatio="none"><path d="M4 14 L14 23.500 L34 3.500" fill="none" stroke="#fff" stroke-width="7"/><path d="M4 28 L14 37.500 L38 13.500" fill="none" stroke="#fff" stroke-width="7"/></svg>
<span style="top:1330.2px;font-size:38.7px;line-height:38.7px;color:#f6f7fb;white-space:nowrap;-webkit-text-stroke:0.4px;left:1575.5px;transform:scaleY(1.04);transform-origin:0 84.65%;">Confirmer le paiement</span>

</body></html>
